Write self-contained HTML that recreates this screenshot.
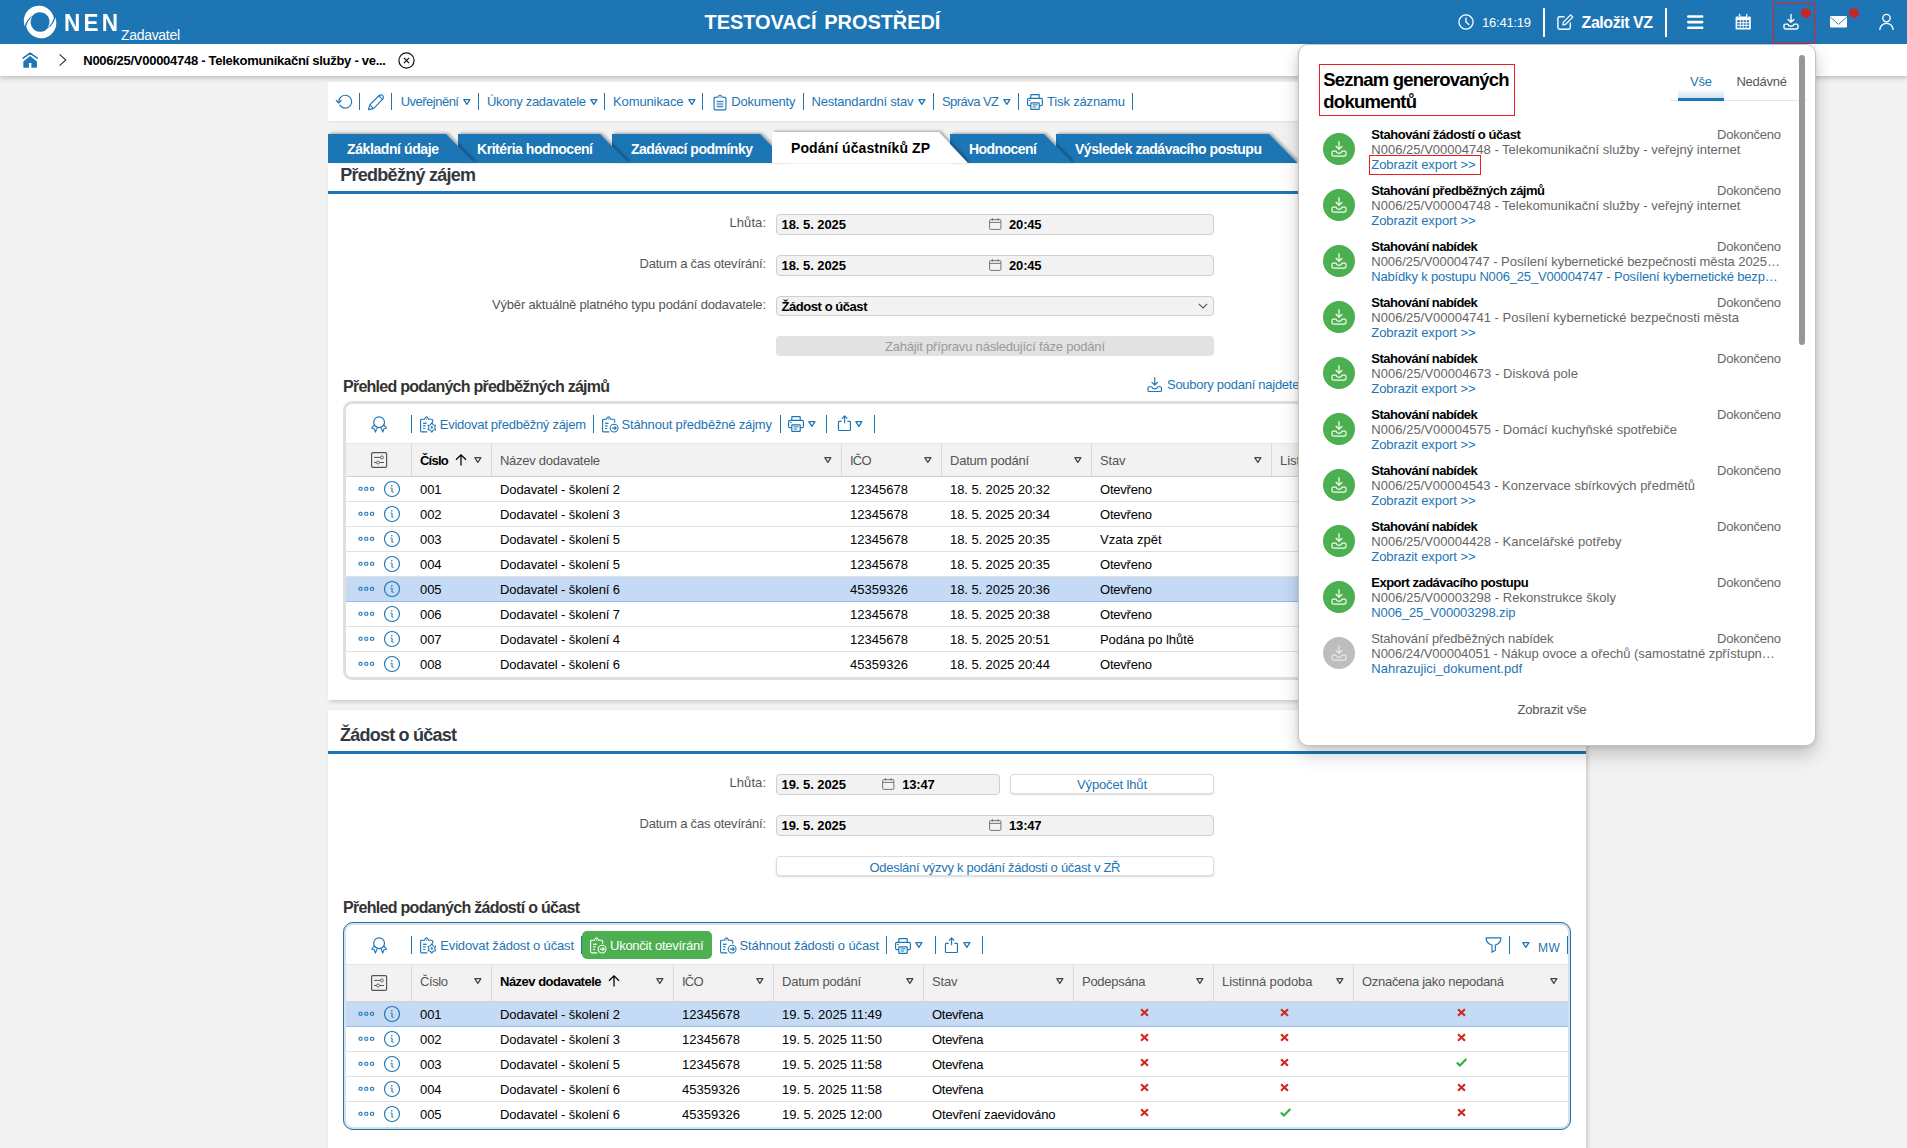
<!DOCTYPE html>
<html lang="cs"><head><meta charset="utf-8"><title>NEN - Zadavatel</title>
<style>
html,body{margin:0;padding:0;}
body{width:1907px;height:1148px;overflow:hidden;background:#f2f2f2;font-family:"Liberation Sans",sans-serif;font-size:13px;position:relative;}
.b{position:absolute;box-sizing:border-box;}
.t{position:absolute;white-space:pre;display:block;}
.i{position:absolute;overflow:visible;}
</style></head>
<body>
<div class="b" style="left:0px;top:44px;width:1907px;height:32px;background:#fff;box-shadow:0 2px 5px rgba(0,0,0,.22);"></div>
<div class="b" style="left:0px;top:0px;width:1907px;height:44px;background:#1d75b4;"></div>
<svg class="i" style="left:23px;top:5px" width="34" height="34" viewBox="0 0 34 34" ><path d="M1.84 21.52 A15.2 15.2 0 1 1 30.91 13.1 C29.8 16.6 27.8 20.2 24.6 22.6 A9.15 9.15 0 1 0 9.2 11.0 C5.0 13.4 2.5 17.6 1.84 21.52 Z" fill="#fff"/><path d="M1.84 21.52 A15.2 15.2 0 1 1 30.91 13.1 C29.8 16.6 27.8 20.2 24.6 22.6 A9.15 9.15 0 1 0 9.2 11.0 C5.0 13.4 2.5 17.6 1.84 21.52 Z" fill="#fff" transform="rotate(180 17.05 17.0)"/></svg>
<span class="t" style="left:63.70px;top:8px;font-size:24.5px;line-height:30px;color:#fff;font-weight:700;letter-spacing:3.481px;transform:scaleX(0.92);transform-origin:0 0;">NEN</span>
<span class="t" style="left:121.00px;top:25px;font-size:14px;line-height:20px;color:#fff;letter-spacing:-0.311px;">Zadavatel</span>
<span class="t" style="left:704.60px;top:9px;font-size:20px;line-height:26px;color:#fff;font-weight:700;letter-spacing:-0.091px;word-spacing:2.5px;">TESTOVACÍ PROSTŘEDÍ</span>
<svg class="i" style="left:1457.5px;top:14px" width="16" height="16" viewBox="0 0 16 16" ><circle cx="8" cy="8" r="7.1" fill="none" stroke="#fff" stroke-width="1.3"/><path d="M8 3.8 V8 L10.8 10.6" fill="none" stroke="#fff" stroke-width="1.3" stroke-linecap="round"/></svg>
<span class="t" style="left:1482.00px;top:13px;font-size:13px;line-height:20px;color:#fff;letter-spacing:-0.230px;">16:41:19</span>
<div class="b" style="left:1543px;top:8px;width:2px;height:29px;background:#fff"></div>
<svg class="i" style="left:1557px;top:14px" width="17" height="16" viewBox="0 0 17 16" ><path d="M7.5 2.7 H2.6 Q0.9 2.7 0.9 4.4 V13.6 Q0.9 15.2 2.6 15.2 H11.6 Q13.3 15.2 13.3 13.6 V8.6" fill="none" stroke="#fff" stroke-width="1.4"/><path d="M13.6 0.9 L15.8 3.1 L8.6 10.3 L5.9 10.9 L6.4 8.1 Z" fill="none" stroke="#fff" stroke-width="1.3" stroke-linejoin="round"/></svg>
<span class="t" style="left:1581.60px;top:12px;font-size:16px;line-height:22px;color:#fff;font-weight:700;letter-spacing:-0.462px;">Založit VZ</span>
<div class="b" style="left:1665px;top:8px;width:2px;height:29px;background:#fff"></div>
<svg class="i" style="left:1686.7px;top:14.9px" width="16.5" height="14.2" viewBox="0 0 16.5 14.2" ><path d="M1.3 1.5 H15.2 M1.3 7.1 H15.2 M1.3 12.7 H15.2" stroke="#fff" stroke-width="2.6" stroke-linecap="round"/></svg>
<svg class="i" style="left:1734.6px;top:14px" width="16.4" height="16" viewBox="0 0 16.4 16" ><path d="M1.8 2.6 H14.6 Q15.8 2.6 15.8 3.8 V14.4 Q15.8 15.6 14.6 15.6 H1.8 Q0.6 15.6 0.6 14.4 V3.8 Q0.6 2.6 1.8 2.6 Z" fill="#fff"/><path d="M4.6 0.4 V3.2 M11.8 0.4 V3.2" stroke="#fff" stroke-width="1.5" stroke-linecap="round"/><rect x="2.3" y="6.2" width="11.8" height="7.6" fill="#1d75b4"/><path d="M2.3 8.7 H14.1 M2.3 11.3 H14.1 M5.3 6.2 V13.8 M8.2 6.2 V13.8 M11.2 6.2 V13.8" stroke="#fff" stroke-width="1.0"/><path d="M3.9 1.2 V3.6 M12.5 1.2 V3.6" stroke="#1d75b4" stroke-width="0.6"/></svg>
<div class="b" style="left:1773px;top:3px;width:42px;height:41px;border:1.5px solid #ec1c24;"></div>
<svg class="i" style="left:1782.7px;top:14px" width="16" height="16" viewBox="0 0 16 16" ><path d="M8 0.5 V8.1 M5.1 5.5 L8 8.3 L10.9 5.5" fill="none" stroke="#fff" stroke-width="1.4" stroke-linecap="round" stroke-linejoin="round"/><path d="M5 10.1 H2.4 Q1 10.1 1 11.5 V13.6 Q1 15 2.4 15 H13.6 Q15 15 15 13.6 V11.5 Q15 10.1 13.6 10.1 H11 Q10.4 12.3 8 12.3 Q5.6 12.3 5 10.1 Z" fill="none" stroke="#fff" stroke-width="1.4" stroke-linejoin="round"/></svg>
<div class="b" style="left:1801px;top:8px;width:10px;height:10px;background:#c62828;border-radius:50%;"></div>
<svg class="i" style="left:1830px;top:16.3px" width="17" height="11.5" viewBox="0 0 17 11.5" ><rect x="0" y="0" width="17" height="11.5" rx="1.3" fill="#fff"/><path d="M0.7 1.3 L8.5 8.4 L16.5 1.3" fill="none" stroke="#1d75b4" stroke-width="0.9"/></svg>
<div class="b" style="left:1849px;top:8px;width:10px;height:10px;background:#c62828;border-radius:50%;"></div>
<svg class="i" style="left:1879px;top:14px" width="15" height="16" viewBox="0 0 15 16" ><circle cx="7.5" cy="4.1" r="3.7" fill="none" stroke="#fff" stroke-width="1.35"/><path d="M0.8 16 A6.7 6.7 0 0 1 14.2 16" fill="none" stroke="#fff" stroke-width="1.35"/></svg>
<svg class="i" style="left:22px;top:52px" width="16.4" height="16" viewBox="0 0 16.4 16" ><path d="M1.1 6.1 L8.16 1.1 L15.2 6.1" fill="none" stroke="#1d75b4" stroke-width="1.6" stroke-linecap="round" stroke-linejoin="round"/><path d="M8.16 4.07 L14.95 9.4 V15 Q14.95 15.87 14 15.87 H9.4 V11 H6.96 V15.87 H2.3 Q1.35 15.87 1.35 15 V9.4 Z" fill="#1d75b4"/></svg>
<svg class="i" style="left:59px;top:54px" width="8" height="12" viewBox="0 0 8 12" ><path d="M0.58 0.34 L6.87 6 L0.58 11.67" fill="none" stroke="#2b2f3a" stroke-width="1.05"/></svg>
<span class="t" style="left:83.30px;top:51px;font-size:13px;line-height:20px;color:#000;font-weight:700;letter-spacing:-0.277px;">N006/25/V00004748 - Telekomunikační služby - ve...</span>
<svg class="i" style="left:398px;top:51.5px" width="17" height="17" viewBox="0 0 17 17" ><circle cx="8.5" cy="8.5" r="7.6" fill="none" stroke="#111" stroke-width="1.2"/><path d="M5.9 5.9 L11.1 11.1 M11.1 5.9 L5.9 11.1" stroke="#111" stroke-width="1.3"/></svg>
<div class="b" style="left:328px;top:82px;width:1258px;height:39px;background:#fff;box-shadow:1px 1px 2px rgba(0,0,0,.08);"></div>
<svg class="i" style="left:336px;top:93.9px" width="16.5" height="15" viewBox="0 0 16.5 15" ><path d="M2.9 8.0 A6.4 6.4 0 1 1 3.9 11.1" fill="none" stroke="#1d75b4" stroke-width="1.15" stroke-linecap="round"/><path d="M0.3 6.5 L2.75 9.0 L5.2 6.7" fill="none" stroke="#1d75b4" stroke-width="1.15" stroke-linecap="round" stroke-linejoin="round"/></svg>
<div class="b" style="left:359px;top:93px;width:1px;height:17px;background:#1d75b4"></div>
<svg class="i" style="left:368px;top:93.8px" width="16.5" height="16.2" viewBox="0 0 16.5 16.2" ><path d="M0.45 15.65 L1.9 10.6 L11.2 1.5 Q12.7 0.2 14.5 1.3 Q16.2 2.9 15 4.9 L5.5 14.6 Z" fill="none" stroke="#1d75b4" stroke-width="1.15" stroke-linejoin="round"/><path d="M1.9 10.6 L5.5 14.6 M10.9 1.9 L14.5 5.4" stroke="#1d75b4" stroke-width="1.05"/></svg>
<div class="b" style="left:391px;top:93px;width:1px;height:17px;background:#1d75b4"></div>
<span class="t" style="left:400.70px;top:92px;font-size:13px;line-height:20px;color:#1d75b4;letter-spacing:-0.508px;">Uveřejnění</span>
<svg class="i" style="left:463px;top:98.8px" width="8" height="7" viewBox="0 0 8 7" ><path d="M0.8 0.7 H6.9 L3.85 5.4 Z" fill="none" stroke="#1d75b4" stroke-width="1.25" stroke-linejoin="round"/></svg>
<span class="t" style="left:487.00px;top:92px;font-size:13px;line-height:20px;color:#1d75b4;letter-spacing:-0.290px;">Úkony zadavatele</span>
<svg class="i" style="left:589.5px;top:98.8px" width="8" height="7" viewBox="0 0 8 7" ><path d="M0.8 0.7 H6.9 L3.85 5.4 Z" fill="none" stroke="#1d75b4" stroke-width="1.25" stroke-linejoin="round"/></svg>
<span class="t" style="left:613.00px;top:92px;font-size:13px;line-height:20px;color:#1d75b4;letter-spacing:-0.116px;">Komunikace</span>
<svg class="i" style="left:687.5px;top:98.8px" width="8" height="7" viewBox="0 0 8 7" ><path d="M0.8 0.7 H6.9 L3.85 5.4 Z" fill="none" stroke="#1d75b4" stroke-width="1.25" stroke-linejoin="round"/></svg>
<div class="b" style="left:478px;top:93px;width:1px;height:17px;background:#1d75b4"></div>
<div class="b" style="left:604px;top:93px;width:1px;height:17px;background:#1d75b4"></div>
<div class="b" style="left:702px;top:93px;width:1px;height:17px;background:#1d75b4"></div>
<div class="b" style="left:803px;top:93px;width:1px;height:17px;background:#1d75b4"></div>
<div class="b" style="left:933px;top:93px;width:1px;height:17px;background:#1d75b4"></div>
<div class="b" style="left:1018px;top:93px;width:1px;height:17px;background:#1d75b4"></div>
<div class="b" style="left:1132px;top:93px;width:1px;height:17px;background:#1d75b4"></div>
<svg class="i" style="left:712.5px;top:93.5px" width="14" height="17" viewBox="0 0 14 17" ><path d="M4.4 3.35 H2.1 Q1.05 3.35 1.05 4.4 V14.8 Q1.05 15.85 2.1 15.85 H11.9 Q12.95 15.85 12.95 14.8 V4.4 Q12.95 3.35 11.9 3.35 H9.6" fill="none" stroke="#1d75b4" stroke-width="1.15"/><path d="M4.4 3.35 C5.5 3.35 5.3 1.0 7 1.0 C8.7 1.0 8.5 3.35 9.6 3.35" fill="none" stroke="#1d75b4" stroke-width="1.15"/><circle cx="7" cy="3.2" r="0.65" fill="#1d75b4"/><path d="M3.6 7.4 H10.4 M3.6 12.6 H10.4" stroke="#1d75b4" stroke-width="1.5" opacity=".85"/><path d="M3.6 10 H10.4" stroke="#1d75b4" stroke-width="1.0"/></svg>
<span class="t" style="left:731.30px;top:92px;font-size:13px;line-height:20px;color:#1d75b4;letter-spacing:-0.194px;">Dokumenty</span>
<span class="t" style="left:811.50px;top:92px;font-size:13px;line-height:20px;color:#1d75b4;letter-spacing:-0.220px;">Nestandardní stav</span>
<svg class="i" style="left:917.7px;top:98.8px" width="8" height="7" viewBox="0 0 8 7" ><path d="M0.8 0.7 H6.9 L3.85 5.4 Z" fill="none" stroke="#1d75b4" stroke-width="1.25" stroke-linejoin="round"/></svg>
<span class="t" style="left:942.00px;top:92px;font-size:13px;line-height:20px;color:#1d75b4;letter-spacing:-0.553px;">Správa VZ</span>
<svg class="i" style="left:1002.6px;top:98.8px" width="8" height="7" viewBox="0 0 8 7" ><path d="M0.8 0.7 H6.9 L3.85 5.4 Z" fill="none" stroke="#1d75b4" stroke-width="1.25" stroke-linejoin="round"/></svg>
<svg class="i" style="left:1027px;top:94px" width="16" height="16" viewBox="0 0 16 16" ><path d="M3.8 4.4 V1.1 Q3.8 0.6 4.3 0.6 H11.7 Q12.2 0.6 12.2 1.1 V4.4" fill="none" stroke="#1d75b4" stroke-width="1.15"/><path d="M3.8 11.6 H1.8 Q0.6 11.6 0.6 10.4 V5.6 Q0.6 4.4 1.8 4.4 H14.2 Q15.4 4.4 15.4 5.6 V10.4 Q15.4 11.6 14.2 11.6 H12.2" fill="none" stroke="#1d75b4" stroke-width="1.15"/><rect x="3.8" y="8.8" width="8.4" height="6.6" rx="0.4" fill="none" stroke="#1d75b4" stroke-width="1.15"/><path d="M5.6 10.9 H10.6 M5.6 13 H9.2" stroke="#1d75b4" stroke-width="1.0"/><path d="M2.3 6.4 H3.3" stroke="#1d75b4" stroke-width="1.0" stroke-linecap="round"/></svg>
<span class="t" style="left:1047.00px;top:92px;font-size:13px;line-height:20px;color:#1d75b4;letter-spacing:-0.156px;">Tisk záznamu</span>
<div class="b" style="left:328px;top:162px;width:1258px;height:538px;background:#fff;box-shadow:2px 2px 4px rgba(0,0,0,.16);"></div>
<svg class="i" style="left:328px;top:126px" width="1010" height="37" viewBox="0 0 1010 37"><defs><filter id="ts" x="-5%" y="-30%" width="110%" height="160%"><feGaussianBlur in="SourceAlpha" stdDeviation="1.5"/><feOffset dx="2" dy="-0.8"/><feComponentTransfer><feFuncA type="linear" slope="0.33"/></feComponentTransfer><feMerge><feMergeNode/><feMergeNode in="SourceGraphic"/></feMerge></filter></defs><polygon filter="url(#ts)" points="728,8 941,8 969.6,37 728,37" fill="#1d75b4"/><polygon filter="url(#ts)" points="622,8 716,8 744.6,37 622,37" fill="#1d75b4"/><polygon filter="url(#ts)" points="284,8 432,8 460.6,37 284,37" fill="#1d75b4"/><polygon filter="url(#ts)" points="130,8 272,8 300.6,37 130,37" fill="#1d75b4"/><polygon filter="url(#ts)" points="0,8 118,8 146.6,37 0,37" fill="#1d75b4"/><polygon filter="url(#ts)" points="444,6 610.8,6 639.8,37 444,37" fill="#fff"/></svg>
<span class="t" style="left:347.00px;top:139px;font-size:14px;line-height:20px;color:#fff;font-weight:700;letter-spacing:-0.404px;">Základní údaje</span>
<span class="t" style="left:477.00px;top:139px;font-size:14px;line-height:20px;color:#fff;font-weight:700;letter-spacing:-0.452px;">Kritéria hodnocení</span>
<span class="t" style="left:631.00px;top:139px;font-size:14px;line-height:20px;color:#fff;font-weight:700;letter-spacing:-0.496px;">Zadávací podmínky</span>
<span class="t" style="left:791.00px;top:138px;font-size:14px;line-height:20px;color:#000;font-weight:700;letter-spacing:0.072px;">Podání účastníků ZP</span>
<span class="t" style="left:969.00px;top:139px;font-size:14px;line-height:20px;color:#fff;font-weight:700;letter-spacing:-0.543px;">Hodnocení</span>
<span class="t" style="left:1075.00px;top:139px;font-size:14px;line-height:20px;color:#fff;font-weight:700;letter-spacing:-0.468px;">Výsledek zadávacího postupu</span>
<span class="t" style="left:340.30px;top:163px;font-size:18px;line-height:24px;color:#333840;font-weight:700;letter-spacing:-0.740px;">Předběžný zájem</span>
<div class="b" style="left:328px;top:191px;width:1258px;height:3px;background:#1d75b4;"></div>
<span class="t" style="left:729.50px;top:213px;font-size:13px;line-height:20px;color:#555;letter-spacing:0.069px;">Lhůta:</span>
<div class="b" style="left:776px;top:214px;width:438px;height:21px;background:#f2f2f2;border:1px solid #cfcfcf;border-radius:4px;"></div>
<span class="t" style="left:781.50px;top:215px;font-size:13px;line-height:20px;color:#000;font-weight:700;letter-spacing:-0.056px;">18. 5. 2025</span>
<svg class="i" style="left:989px;top:218px" width="12.5" height="12" viewBox="0 0 12.5 12" ><rect x="0.6" y="1.6" width="11.3" height="9.8" rx="1" fill="none" stroke="#666" stroke-width="0.9"/><path d="M0.6 4.4 H11.9 M3.4 0.2 V2.6 M9.1 0.2 V2.6" stroke="#666" stroke-width="0.9"/></svg>
<span class="t" style="left:1009.00px;top:215px;font-size:13px;line-height:20px;color:#000;font-weight:700;letter-spacing:-0.163px;">20:45</span>
<span class="t" style="left:639.50px;top:254px;font-size:13px;line-height:20px;color:#555;letter-spacing:-0.204px;">Datum a čas otevírání:</span>
<div class="b" style="left:776px;top:255px;width:438px;height:21px;background:#f2f2f2;border:1px solid #cfcfcf;border-radius:4px;"></div>
<span class="t" style="left:781.50px;top:256px;font-size:13px;line-height:20px;color:#000;font-weight:700;letter-spacing:-0.056px;">18. 5. 2025</span>
<svg class="i" style="left:989px;top:259px" width="12.5" height="12" viewBox="0 0 12.5 12" ><rect x="0.6" y="1.6" width="11.3" height="9.8" rx="1" fill="none" stroke="#666" stroke-width="0.9"/><path d="M0.6 4.4 H11.9 M3.4 0.2 V2.6 M9.1 0.2 V2.6" stroke="#666" stroke-width="0.9"/></svg>
<span class="t" style="left:1009.00px;top:256px;font-size:13px;line-height:20px;color:#000;font-weight:700;letter-spacing:-0.163px;">20:45</span>
<span class="t" style="left:492.00px;top:295px;font-size:13px;line-height:20px;color:#555;letter-spacing:-0.187px;">Výběr aktuálně platného typu podání dodavatele:</span>
<div class="b" style="left:776px;top:296px;width:438px;height:20px;background:#f2f2f2;border:1px solid #cfcfcf;border-radius:4px;"></div>
<span class="t" style="left:781.50px;top:297px;font-size:13px;line-height:20px;color:#000;font-weight:700;letter-spacing:-0.442px;">Žádost o účast</span>
<svg class="i" style="left:1197.7px;top:302.8px" width="10" height="6" viewBox="0 0 10 6" ><path d="M0.8 0.8 L5 5 L9.2 0.8" fill="none" stroke="#555" stroke-width="1.1"/></svg>
<div class="b" style="left:776px;top:336px;width:438px;height:20px;background:#e2e2e2;border-radius:4px;"></div>
<span class="t" style="left:885.00px;top:337px;font-size:13px;line-height:20px;color:#9a9a9a;letter-spacing:-0.196px;">Zahájit přípravu následující fáze podání</span>
<span class="t" style="left:343.00px;top:376px;font-size:16px;line-height:22px;color:#333;font-weight:700;letter-spacing:-0.746px;">Přehled podaných předběžných zájmů</span>
<svg class="i" style="left:1147px;top:376.5px" width="15.5" height="15.5" viewBox="0 0 16 16" ><path d="M8 0.5 V8.1 M5.1 5.5 L8 8.3 L10.9 5.5" fill="none" stroke="#1d75b4" stroke-width="1.2" stroke-linecap="round" stroke-linejoin="round"/><path d="M5 10.1 H2.4 Q1 10.1 1 11.5 V13.6 Q1 15 2.4 15 H13.6 Q15 15 15 13.6 V11.5 Q15 10.1 13.6 10.1 H11 Q10.4 12.3 8 12.3 Q5.6 12.3 5 10.1 Z" fill="none" stroke="#1d75b4" stroke-width="1.2" stroke-linejoin="round"/></svg>
<span class="t" style="left:1167.00px;top:375px;font-size:13px;line-height:20px;color:#1d75b4;letter-spacing:-0.271px;">Soubory podaní najdete v sekci Stahování</span>
<div class="b" style="left:343px;top:401px;width:1240px;height:279px;border:3px solid #dddfe1;border-radius:9px;background:#fff;"></div>
<svg class="i" style="left:371px;top:415.5px" width="16.2" height="16.8" viewBox="0 0 16.2 16.8" ><circle cx="8.1" cy="6.2" r="5.4" fill="none" stroke="#1d75b4" stroke-width="1.15"/><path d="M3.3 9.2 L0.6 12.1 L3.5 13 L4.4 16.1 L6.2 11.9 M12.9 9.2 L15.6 12.1 L12.7 13 L11.8 16.1 L10 11.9" fill="none" stroke="#1d75b4" stroke-width="1.1" stroke-linejoin="round" stroke-linecap="round"/></svg>
<div class="b" style="left:411px;top:415px;width:1px;height:18px;background:#1d75b4"></div>
<svg class="i" style="left:420px;top:415.5px" width="17" height="17" viewBox="0 0 17 17" ><path d="M4 3.2 H1.7 Q0.6 3.2 0.6 4.3 V14.8 Q0.6 15.9 1.7 15.9 H6.8 M9.1 3.2 H11.6 Q12.7 3.2 12.7 4.3 V6.3" fill="none" stroke="#1d75b4" stroke-width="1.1" stroke-linecap="round"/><path d="M4 3.2 C5.1 3.2 4.9 0.9 6.55 0.9 C8.2 0.9 8 3.2 9.1 3.2" fill="none" stroke="#1d75b4" stroke-width="1.1"/><circle cx="6.55" cy="3.1" r="0.65" fill="#1d75b4"/><path d="M3.1 7.3 H6.6" stroke="#1d75b4" stroke-width="1.3"/><path d="M3.1 9.9 H5.6 M3.1 12.5 H5.2" stroke="#1d75b4" stroke-width="1.1"/><polygon points="11.80,6.80 13.23,8.90 15.67,9.15 14.65,11.50 15.67,13.85 13.23,14.10 11.80,16.20 10.38,14.10 7.93,13.85 8.95,11.50 7.93,9.15 10.38,8.90" fill="none" stroke="#1d75b4" stroke-width="1.05" stroke-linejoin="round"/><circle cx="11.8" cy="11.5" r="1.15" fill="#1d75b4"/></svg>
<span class="t" style="left:439.80px;top:415px;font-size:13px;line-height:20px;color:#1d75b4;letter-spacing:-0.273px;">Evidovat předběžný zájem</span>
<div class="b" style="left:593px;top:415px;width:1px;height:18px;background:#1d75b4"></div>
<svg class="i" style="left:602px;top:415.5px" width="17" height="17" viewBox="0 0 17 17" ><path d="M4 3.2 H1.7 Q0.6 3.2 0.6 4.3 V14.8 Q0.6 15.9 1.7 15.9 H6.8 M9.1 3.2 H11.6 Q12.7 3.2 12.7 4.3 V6.3" fill="none" stroke="#1d75b4" stroke-width="1.1" stroke-linecap="round"/><path d="M4 3.2 C5.1 3.2 4.9 0.9 6.55 0.9 C8.2 0.9 8 3.2 9.1 3.2" fill="none" stroke="#1d75b4" stroke-width="1.1"/><circle cx="6.55" cy="3.1" r="0.65" fill="#1d75b4"/><path d="M3.1 7.3 H6.6" stroke="#1d75b4" stroke-width="1.3"/><path d="M3.1 9.9 H5.6 M3.1 12.5 H5.2" stroke="#1d75b4" stroke-width="1.1"/><circle cx="12.1" cy="12.1" r="3.95" fill="none" stroke="#1d75b4" stroke-width="1.05"/><path d="M9.9 12.1 H14 M12.5 10.4 L14.2 12.1 L12.5 13.8" fill="none" stroke="#1d75b4" stroke-width="1.05"/></svg>
<span class="t" style="left:621.60px;top:415px;font-size:13px;line-height:20px;color:#1d75b4;letter-spacing:-0.185px;">Stáhnout předběžné zájmy</span>
<div class="b" style="left:780px;top:415px;width:1px;height:18px;background:#1d75b4"></div>
<svg class="i" style="left:788px;top:416px" width="16" height="16" viewBox="0 0 16 16" ><path d="M3.8 4.4 V1.1 Q3.8 0.6 4.3 0.6 H11.7 Q12.2 0.6 12.2 1.1 V4.4" fill="none" stroke="#1d75b4" stroke-width="1.15"/><path d="M3.8 11.6 H1.8 Q0.6 11.6 0.6 10.4 V5.6 Q0.6 4.4 1.8 4.4 H14.2 Q15.4 4.4 15.4 5.6 V10.4 Q15.4 11.6 14.2 11.6 H12.2" fill="none" stroke="#1d75b4" stroke-width="1.15"/><rect x="3.8" y="8.8" width="8.4" height="6.6" rx="0.4" fill="none" stroke="#1d75b4" stroke-width="1.15"/><path d="M5.6 10.9 H10.6 M5.6 13 H9.2" stroke="#1d75b4" stroke-width="1.0"/><path d="M2.3 6.4 H3.3" stroke="#1d75b4" stroke-width="1.0" stroke-linecap="round"/></svg>
<svg class="i" style="left:808px;top:421px" width="8" height="7" viewBox="0 0 8 7" ><path d="M0.8 0.7 H6.9 L3.85 5.4 Z" fill="none" stroke="#1d75b4" stroke-width="1.25" stroke-linejoin="round"/></svg>
<div class="b" style="left:826px;top:415px;width:1px;height:18px;background:#1d75b4"></div>
<svg class="i" style="left:836.5px;top:415.3px" width="15" height="16.2" viewBox="0 0 15 16.2" ><path d="M4.6 6.45 H2.2 Q1.45 6.45 1.45 7.2 V14.8 Q1.45 15.55 2.2 15.55 H12.7 Q13.45 15.55 13.45 14.8 V7.2 Q13.45 6.45 12.7 6.45 H10.4" fill="none" stroke="#1d75b4" stroke-width="1.15"/><path d="M7.6 8.3 V1.1 M4.9 3.7 L7.6 0.95 L10.3 3.7" fill="none" stroke="#1d75b4" stroke-width="1.15" stroke-linejoin="round"/></svg>
<svg class="i" style="left:855px;top:421px" width="8" height="7" viewBox="0 0 8 7" ><path d="M0.8 0.7 H6.9 L3.85 5.4 Z" fill="none" stroke="#1d75b4" stroke-width="1.25" stroke-linejoin="round"/></svg>
<div class="b" style="left:874px;top:415px;width:1px;height:18px;background:#1d75b4"></div>
<div class="b" style="left:346px;top:443px;width:1234px;height:34px;background:#f2f2f2;border-top:1px solid #e6e6e6;border-bottom:1px solid #d2d2d2;"></div>
<div class="b" style="left:411px;top:444px;width:1px;height:32px;background:#d9d9d9;"></div>
<div class="b" style="left:491px;top:444px;width:1px;height:32px;background:#d9d9d9;"></div>
<div class="b" style="left:841px;top:444px;width:1px;height:32px;background:#d9d9d9;"></div>
<div class="b" style="left:941px;top:444px;width:1px;height:32px;background:#d9d9d9;"></div>
<div class="b" style="left:1091px;top:444px;width:1px;height:32px;background:#d9d9d9;"></div>
<div class="b" style="left:1271px;top:444px;width:1px;height:32px;background:#d9d9d9;"></div>
<div class="b" style="left:1411px;top:444px;width:1px;height:32px;background:#d9d9d9;"></div>
<svg class="i" style="left:370.9px;top:452px" width="16.2" height="16" viewBox="0 0 16.2 16" ><rect x="0.6" y="0.6" width="15" height="14.8" rx="1.2" fill="none" stroke="#555" stroke-width="1.2"/><path d="M3 5.4 H9.4 M3 10.5 H5.5 M8.5 10.5 H13" stroke="#555" stroke-width="1.0"/><circle cx="10.9" cy="5.4" r="1.5" fill="none" stroke="#555" stroke-width="0.9"/><circle cx="7" cy="10.5" r="1.5" fill="none" stroke="#555" stroke-width="0.9"/></svg>
<span class="t" style="left:420.00px;top:451px;font-size:13px;line-height:20px;color:#000;font-weight:700;letter-spacing:-0.774px;">Číslo</span>
<svg class="i" style="left:455px;top:454px" width="12" height="12" viewBox="0 0 12 12" ><path d="M6 11.6 V0.9 M1 5.8 L6 0.8 L11 5.8" fill="none" stroke="#000" stroke-width="1.25"/></svg>
<svg class="i" style="left:474.3px;top:457.2px" width="8" height="7" viewBox="0 0 8 7" ><path d="M0.8 0.7 H6.9 L3.85 5.4 Z" fill="none" stroke="#444" stroke-width="1.25" stroke-linejoin="round"/></svg>
<span class="t" style="left:500.00px;top:451px;font-size:13px;line-height:20px;color:#555;letter-spacing:-0.272px;">Název dodavatele</span>
<svg class="i" style="left:824px;top:457.2px" width="8" height="7" viewBox="0 0 8 7" ><path d="M0.8 0.7 H6.9 L3.85 5.4 Z" fill="none" stroke="#444" stroke-width="1.25" stroke-linejoin="round"/></svg>
<span class="t" style="left:850.00px;top:451px;font-size:13px;line-height:20px;color:#555;letter-spacing:-0.812px;">IČO</span>
<svg class="i" style="left:924px;top:457.2px" width="8" height="7" viewBox="0 0 8 7" ><path d="M0.8 0.7 H6.9 L3.85 5.4 Z" fill="none" stroke="#444" stroke-width="1.25" stroke-linejoin="round"/></svg>
<span class="t" style="left:950.00px;top:451px;font-size:13px;line-height:20px;color:#555;letter-spacing:-0.243px;">Datum podání</span>
<svg class="i" style="left:1074px;top:457.2px" width="8" height="7" viewBox="0 0 8 7" ><path d="M0.8 0.7 H6.9 L3.85 5.4 Z" fill="none" stroke="#444" stroke-width="1.25" stroke-linejoin="round"/></svg>
<span class="t" style="left:1100.00px;top:451px;font-size:13px;line-height:20px;color:#555;letter-spacing:-0.172px;">Stav</span>
<svg class="i" style="left:1254px;top:457.2px" width="8" height="7" viewBox="0 0 8 7" ><path d="M0.8 0.7 H6.9 L3.85 5.4 Z" fill="none" stroke="#444" stroke-width="1.25" stroke-linejoin="round"/></svg>
<span class="t" style="left:1280.00px;top:451px;font-size:13px;line-height:20px;color:#555;letter-spacing:-0.058px;">Listinná podoba</span>
<svg class="i" style="left:1394px;top:457.2px" width="8" height="7" viewBox="0 0 8 7" ><path d="M0.8 0.7 H6.9 L3.85 5.4 Z" fill="none" stroke="#444" stroke-width="1.25" stroke-linejoin="round"/></svg>
<div class="b" style="left:346px;top:501px;width:1234px;height:1px;background:#e0e0e0;"></div>
<svg class="i" style="left:357.5px;top:486.3px" width="17" height="5.6" viewBox="0 0 17 5.6" ><rect x="1" y="1.3" width="3.1" height="3.0" rx="1.1" fill="none" stroke="#1d75b4" stroke-width="1.1"/><rect x="6.75" y="1.3" width="3.1" height="3.0" rx="1.1" fill="none" stroke="#1d75b4" stroke-width="1.1"/><rect x="12.55" y="1.3" width="3.1" height="3.0" rx="1.1" fill="none" stroke="#1d75b4" stroke-width="1.1"/></svg>
<svg class="i" style="left:384px;top:481px" width="16" height="16" viewBox="0 0 16 16" ><circle cx="8" cy="8" r="7.5" fill="none" stroke="#1d75b4" stroke-width="1.15"/><circle cx="7.8" cy="4.7" r="0.8" fill="#1d75b4"/><path d="M7 6.9 Q8.3 6.9 8.1 8.5 L7.9 10 Q7.8 11.3 9.2 11.2" fill="none" stroke="#1d75b4" stroke-width="1.05" stroke-linecap="round"/></svg>
<span class="t" style="left:420.00px;top:480px;font-size:13px;line-height:20px;color:#000;letter-spacing:-0.102px;">001</span>
<span class="t" style="left:500.00px;top:480px;font-size:13px;line-height:20px;color:#000;letter-spacing:-0.106px;">Dodavatel - školení 2</span>
<span class="t" style="left:850.00px;top:480px;font-size:13px;line-height:20px;color:#000;letter-spacing:0.022px;">12345678</span>
<span class="t" style="left:950.00px;top:480px;font-size:13px;line-height:20px;color:#000;letter-spacing:-0.075px;">18. 5. 2025 20:32</span>
<span class="t" style="left:1100.00px;top:480px;font-size:13px;line-height:20px;color:#000;letter-spacing:-0.212px;">Otevřeno</span>
<div class="b" style="left:346px;top:526px;width:1234px;height:1px;background:#e0e0e0;"></div>
<svg class="i" style="left:357.5px;top:511.3px" width="17" height="5.6" viewBox="0 0 17 5.6" ><rect x="1" y="1.3" width="3.1" height="3.0" rx="1.1" fill="none" stroke="#1d75b4" stroke-width="1.1"/><rect x="6.75" y="1.3" width="3.1" height="3.0" rx="1.1" fill="none" stroke="#1d75b4" stroke-width="1.1"/><rect x="12.55" y="1.3" width="3.1" height="3.0" rx="1.1" fill="none" stroke="#1d75b4" stroke-width="1.1"/></svg>
<svg class="i" style="left:384px;top:506px" width="16" height="16" viewBox="0 0 16 16" ><circle cx="8" cy="8" r="7.5" fill="none" stroke="#1d75b4" stroke-width="1.15"/><circle cx="7.8" cy="4.7" r="0.8" fill="#1d75b4"/><path d="M7 6.9 Q8.3 6.9 8.1 8.5 L7.9 10 Q7.8 11.3 9.2 11.2" fill="none" stroke="#1d75b4" stroke-width="1.05" stroke-linecap="round"/></svg>
<span class="t" style="left:420.00px;top:505px;font-size:13px;line-height:20px;color:#000;letter-spacing:-0.102px;">002</span>
<span class="t" style="left:500.00px;top:505px;font-size:13px;line-height:20px;color:#000;letter-spacing:-0.106px;">Dodavatel - školení 3</span>
<span class="t" style="left:850.00px;top:505px;font-size:13px;line-height:20px;color:#000;letter-spacing:0.022px;">12345678</span>
<span class="t" style="left:950.00px;top:505px;font-size:13px;line-height:20px;color:#000;letter-spacing:-0.075px;">18. 5. 2025 20:34</span>
<span class="t" style="left:1100.00px;top:505px;font-size:13px;line-height:20px;color:#000;letter-spacing:-0.212px;">Otevřeno</span>
<div class="b" style="left:346px;top:551px;width:1234px;height:1px;background:#e0e0e0;"></div>
<svg class="i" style="left:357.5px;top:536.3px" width="17" height="5.6" viewBox="0 0 17 5.6" ><rect x="1" y="1.3" width="3.1" height="3.0" rx="1.1" fill="none" stroke="#1d75b4" stroke-width="1.1"/><rect x="6.75" y="1.3" width="3.1" height="3.0" rx="1.1" fill="none" stroke="#1d75b4" stroke-width="1.1"/><rect x="12.55" y="1.3" width="3.1" height="3.0" rx="1.1" fill="none" stroke="#1d75b4" stroke-width="1.1"/></svg>
<svg class="i" style="left:384px;top:531px" width="16" height="16" viewBox="0 0 16 16" ><circle cx="8" cy="8" r="7.5" fill="none" stroke="#1d75b4" stroke-width="1.15"/><circle cx="7.8" cy="4.7" r="0.8" fill="#1d75b4"/><path d="M7 6.9 Q8.3 6.9 8.1 8.5 L7.9 10 Q7.8 11.3 9.2 11.2" fill="none" stroke="#1d75b4" stroke-width="1.05" stroke-linecap="round"/></svg>
<span class="t" style="left:420.00px;top:530px;font-size:13px;line-height:20px;color:#000;letter-spacing:-0.102px;">003</span>
<span class="t" style="left:500.00px;top:530px;font-size:13px;line-height:20px;color:#000;letter-spacing:-0.106px;">Dodavatel - školení 5</span>
<span class="t" style="left:850.00px;top:530px;font-size:13px;line-height:20px;color:#000;letter-spacing:0.022px;">12345678</span>
<span class="t" style="left:950.00px;top:530px;font-size:13px;line-height:20px;color:#000;letter-spacing:-0.075px;">18. 5. 2025 20:35</span>
<span class="t" style="left:1100.00px;top:530px;font-size:13px;line-height:20px;color:#000;letter-spacing:0.007px;">Vzata zpět</span>
<div class="b" style="left:346px;top:576px;width:1234px;height:1px;background:#e0e0e0;"></div>
<svg class="i" style="left:357.5px;top:561.3px" width="17" height="5.6" viewBox="0 0 17 5.6" ><rect x="1" y="1.3" width="3.1" height="3.0" rx="1.1" fill="none" stroke="#1d75b4" stroke-width="1.1"/><rect x="6.75" y="1.3" width="3.1" height="3.0" rx="1.1" fill="none" stroke="#1d75b4" stroke-width="1.1"/><rect x="12.55" y="1.3" width="3.1" height="3.0" rx="1.1" fill="none" stroke="#1d75b4" stroke-width="1.1"/></svg>
<svg class="i" style="left:384px;top:556px" width="16" height="16" viewBox="0 0 16 16" ><circle cx="8" cy="8" r="7.5" fill="none" stroke="#1d75b4" stroke-width="1.15"/><circle cx="7.8" cy="4.7" r="0.8" fill="#1d75b4"/><path d="M7 6.9 Q8.3 6.9 8.1 8.5 L7.9 10 Q7.8 11.3 9.2 11.2" fill="none" stroke="#1d75b4" stroke-width="1.05" stroke-linecap="round"/></svg>
<span class="t" style="left:420.00px;top:555px;font-size:13px;line-height:20px;color:#000;letter-spacing:-0.102px;">004</span>
<span class="t" style="left:500.00px;top:555px;font-size:13px;line-height:20px;color:#000;letter-spacing:-0.106px;">Dodavatel - školení 5</span>
<span class="t" style="left:850.00px;top:555px;font-size:13px;line-height:20px;color:#000;letter-spacing:0.022px;">12345678</span>
<span class="t" style="left:950.00px;top:555px;font-size:13px;line-height:20px;color:#000;letter-spacing:-0.075px;">18. 5. 2025 20:35</span>
<span class="t" style="left:1100.00px;top:555px;font-size:13px;line-height:20px;color:#000;letter-spacing:-0.212px;">Otevřeno</span>
<div class="b" style="left:346px;top:577px;width:1234px;height:25px;background:#c4daf5;border-bottom:1px solid #93baeb;"></div>
<svg class="i" style="left:357.5px;top:586.3px" width="17" height="5.6" viewBox="0 0 17 5.6" ><rect x="1" y="1.3" width="3.1" height="3.0" rx="1.1" fill="none" stroke="#1d75b4" stroke-width="1.1"/><rect x="6.75" y="1.3" width="3.1" height="3.0" rx="1.1" fill="none" stroke="#1d75b4" stroke-width="1.1"/><rect x="12.55" y="1.3" width="3.1" height="3.0" rx="1.1" fill="none" stroke="#1d75b4" stroke-width="1.1"/></svg>
<svg class="i" style="left:384px;top:581px" width="16" height="16" viewBox="0 0 16 16" ><circle cx="8" cy="8" r="7.5" fill="none" stroke="#1d75b4" stroke-width="1.15"/><circle cx="7.8" cy="4.7" r="0.8" fill="#1d75b4"/><path d="M7 6.9 Q8.3 6.9 8.1 8.5 L7.9 10 Q7.8 11.3 9.2 11.2" fill="none" stroke="#1d75b4" stroke-width="1.05" stroke-linecap="round"/></svg>
<span class="t" style="left:420.00px;top:580px;font-size:13px;line-height:20px;color:#000;letter-spacing:-0.102px;">005</span>
<span class="t" style="left:500.00px;top:580px;font-size:13px;line-height:20px;color:#000;letter-spacing:-0.106px;">Dodavatel - školení 6</span>
<span class="t" style="left:850.00px;top:580px;font-size:13px;line-height:20px;color:#000;letter-spacing:0.022px;">45359326</span>
<span class="t" style="left:950.00px;top:580px;font-size:13px;line-height:20px;color:#000;letter-spacing:-0.075px;">18. 5. 2025 20:36</span>
<span class="t" style="left:1100.00px;top:580px;font-size:13px;line-height:20px;color:#000;letter-spacing:-0.212px;">Otevřeno</span>
<div class="b" style="left:346px;top:626px;width:1234px;height:1px;background:#e0e0e0;"></div>
<svg class="i" style="left:357.5px;top:611.3px" width="17" height="5.6" viewBox="0 0 17 5.6" ><rect x="1" y="1.3" width="3.1" height="3.0" rx="1.1" fill="none" stroke="#1d75b4" stroke-width="1.1"/><rect x="6.75" y="1.3" width="3.1" height="3.0" rx="1.1" fill="none" stroke="#1d75b4" stroke-width="1.1"/><rect x="12.55" y="1.3" width="3.1" height="3.0" rx="1.1" fill="none" stroke="#1d75b4" stroke-width="1.1"/></svg>
<svg class="i" style="left:384px;top:606px" width="16" height="16" viewBox="0 0 16 16" ><circle cx="8" cy="8" r="7.5" fill="none" stroke="#1d75b4" stroke-width="1.15"/><circle cx="7.8" cy="4.7" r="0.8" fill="#1d75b4"/><path d="M7 6.9 Q8.3 6.9 8.1 8.5 L7.9 10 Q7.8 11.3 9.2 11.2" fill="none" stroke="#1d75b4" stroke-width="1.05" stroke-linecap="round"/></svg>
<span class="t" style="left:420.00px;top:605px;font-size:13px;line-height:20px;color:#000;letter-spacing:-0.102px;">006</span>
<span class="t" style="left:500.00px;top:605px;font-size:13px;line-height:20px;color:#000;letter-spacing:-0.106px;">Dodavatel - školení 7</span>
<span class="t" style="left:850.00px;top:605px;font-size:13px;line-height:20px;color:#000;letter-spacing:0.022px;">12345678</span>
<span class="t" style="left:950.00px;top:605px;font-size:13px;line-height:20px;color:#000;letter-spacing:-0.075px;">18. 5. 2025 20:38</span>
<span class="t" style="left:1100.00px;top:605px;font-size:13px;line-height:20px;color:#000;letter-spacing:-0.212px;">Otevřeno</span>
<div class="b" style="left:346px;top:651px;width:1234px;height:1px;background:#e0e0e0;"></div>
<svg class="i" style="left:357.5px;top:636.3px" width="17" height="5.6" viewBox="0 0 17 5.6" ><rect x="1" y="1.3" width="3.1" height="3.0" rx="1.1" fill="none" stroke="#1d75b4" stroke-width="1.1"/><rect x="6.75" y="1.3" width="3.1" height="3.0" rx="1.1" fill="none" stroke="#1d75b4" stroke-width="1.1"/><rect x="12.55" y="1.3" width="3.1" height="3.0" rx="1.1" fill="none" stroke="#1d75b4" stroke-width="1.1"/></svg>
<svg class="i" style="left:384px;top:631px" width="16" height="16" viewBox="0 0 16 16" ><circle cx="8" cy="8" r="7.5" fill="none" stroke="#1d75b4" stroke-width="1.15"/><circle cx="7.8" cy="4.7" r="0.8" fill="#1d75b4"/><path d="M7 6.9 Q8.3 6.9 8.1 8.5 L7.9 10 Q7.8 11.3 9.2 11.2" fill="none" stroke="#1d75b4" stroke-width="1.05" stroke-linecap="round"/></svg>
<span class="t" style="left:420.00px;top:630px;font-size:13px;line-height:20px;color:#000;letter-spacing:-0.102px;">007</span>
<span class="t" style="left:500.00px;top:630px;font-size:13px;line-height:20px;color:#000;letter-spacing:-0.106px;">Dodavatel - školení 4</span>
<span class="t" style="left:850.00px;top:630px;font-size:13px;line-height:20px;color:#000;letter-spacing:0.022px;">12345678</span>
<span class="t" style="left:950.00px;top:630px;font-size:13px;line-height:20px;color:#000;letter-spacing:-0.075px;">18. 5. 2025 20:51</span>
<span class="t" style="left:1100.00px;top:630px;font-size:13px;line-height:20px;color:#000;letter-spacing:-0.050px;">Podána po lhůtě</span>
<svg class="i" style="left:357.5px;top:661.3px" width="17" height="5.6" viewBox="0 0 17 5.6" ><rect x="1" y="1.3" width="3.1" height="3.0" rx="1.1" fill="none" stroke="#1d75b4" stroke-width="1.1"/><rect x="6.75" y="1.3" width="3.1" height="3.0" rx="1.1" fill="none" stroke="#1d75b4" stroke-width="1.1"/><rect x="12.55" y="1.3" width="3.1" height="3.0" rx="1.1" fill="none" stroke="#1d75b4" stroke-width="1.1"/></svg>
<svg class="i" style="left:384px;top:656px" width="16" height="16" viewBox="0 0 16 16" ><circle cx="8" cy="8" r="7.5" fill="none" stroke="#1d75b4" stroke-width="1.15"/><circle cx="7.8" cy="4.7" r="0.8" fill="#1d75b4"/><path d="M7 6.9 Q8.3 6.9 8.1 8.5 L7.9 10 Q7.8 11.3 9.2 11.2" fill="none" stroke="#1d75b4" stroke-width="1.05" stroke-linecap="round"/></svg>
<span class="t" style="left:420.00px;top:655px;font-size:13px;line-height:20px;color:#000;letter-spacing:-0.102px;">008</span>
<span class="t" style="left:500.00px;top:655px;font-size:13px;line-height:20px;color:#000;letter-spacing:-0.106px;">Dodavatel - školení 6</span>
<span class="t" style="left:850.00px;top:655px;font-size:13px;line-height:20px;color:#000;letter-spacing:0.022px;">45359326</span>
<span class="t" style="left:950.00px;top:655px;font-size:13px;line-height:20px;color:#000;letter-spacing:-0.075px;">18. 5. 2025 20:44</span>
<span class="t" style="left:1100.00px;top:655px;font-size:13px;line-height:20px;color:#000;letter-spacing:-0.212px;">Otevřeno</span>
<div class="b" style="left:328px;top:710px;width:1258px;height:460px;background:#fff;box-shadow:2px 2px 4px rgba(0,0,0,.16);"></div>
<span class="t" style="left:340.00px;top:723px;font-size:18px;line-height:24px;color:#333840;font-weight:700;letter-spacing:-0.772px;">Žádost o účast</span>
<div class="b" style="left:328px;top:751px;width:1258px;height:3px;background:#1d75b4;"></div>
<span class="t" style="left:729.50px;top:773px;font-size:13px;line-height:20px;color:#555;letter-spacing:0.069px;">Lhůta:</span>
<div class="b" style="left:776px;top:774px;width:224px;height:21px;background:#f2f2f2;border:1px solid #cfcfcf;border-radius:4px;"></div>
<span class="t" style="left:781.50px;top:775px;font-size:13px;line-height:20px;color:#000;font-weight:700;letter-spacing:-0.056px;">19. 5. 2025</span>
<svg class="i" style="left:881.5px;top:778px" width="12.5" height="12" viewBox="0 0 12.5 12" ><rect x="0.6" y="1.6" width="11.3" height="9.8" rx="1" fill="none" stroke="#666" stroke-width="0.9"/><path d="M0.6 4.4 H11.9 M3.4 0.2 V2.6 M9.1 0.2 V2.6" stroke="#666" stroke-width="0.9"/></svg>
<span class="t" style="left:902.20px;top:775px;font-size:13px;line-height:20px;color:#000;font-weight:700;letter-spacing:-0.163px;">13:47</span>
<div class="b" style="left:1010px;top:774px;width:204px;height:20px;background:#fff;border:1px solid #dcdcdc;border-radius:4px;box-shadow:0 1px 2px rgba(0,0,0,.15);"></div>
<span class="t" style="left:1077.00px;top:775px;font-size:13px;line-height:20px;color:#1d75b4;letter-spacing:-0.141px;">Výpočet lhůt</span>
<span class="t" style="left:639.50px;top:814px;font-size:13px;line-height:20px;color:#555;letter-spacing:-0.204px;">Datum a čas otevírání:</span>
<div class="b" style="left:776px;top:815px;width:438px;height:21px;background:#f2f2f2;border:1px solid #cfcfcf;border-radius:4px;"></div>
<span class="t" style="left:781.50px;top:816px;font-size:13px;line-height:20px;color:#000;font-weight:700;letter-spacing:-0.056px;">19. 5. 2025</span>
<svg class="i" style="left:989px;top:819px" width="12.5" height="12" viewBox="0 0 12.5 12" ><rect x="0.6" y="1.6" width="11.3" height="9.8" rx="1" fill="none" stroke="#666" stroke-width="0.9"/><path d="M0.6 4.4 H11.9 M3.4 0.2 V2.6 M9.1 0.2 V2.6" stroke="#666" stroke-width="0.9"/></svg>
<span class="t" style="left:1009.00px;top:816px;font-size:13px;line-height:20px;color:#000;font-weight:700;letter-spacing:-0.163px;">13:47</span>
<div class="b" style="left:776px;top:856px;width:438px;height:20px;background:#fff;border:1px solid #dcdcdc;border-radius:4px;box-shadow:0 1px 2px rgba(0,0,0,.15);"></div>
<span class="t" style="left:869.50px;top:858px;font-size:13px;line-height:20px;color:#1d75b4;letter-spacing:-0.279px;">Odeslání výzvy k podání žádosti o účast v ZŘ</span>
<span class="t" style="left:343.00px;top:897px;font-size:16px;line-height:22px;color:#333;font-weight:700;letter-spacing:-0.701px;">Přehled podaných žádostí o účast</span>
<div class="b" style="left:343px;top:922px;width:1228px;height:208px;border:3px solid #dddfe2;border-radius:10px;background:#fff;"></div>
<div class="b" style="left:343px;top:922px;width:1228px;height:208px;border:1.4px solid #1d75b4;border-radius:10px;"></div>
<svg class="i" style="left:371px;top:937px" width="16.2" height="16.8" viewBox="0 0 16.2 16.8" ><circle cx="8.1" cy="6.2" r="5.4" fill="none" stroke="#1d75b4" stroke-width="1.15"/><path d="M3.3 9.2 L0.6 12.1 L3.5 13 L4.4 16.1 L6.2 11.9 M12.9 9.2 L15.6 12.1 L12.7 13 L11.8 16.1 L10 11.9" fill="none" stroke="#1d75b4" stroke-width="1.1" stroke-linejoin="round" stroke-linecap="round"/></svg>
<div class="b" style="left:411px;top:936px;width:1px;height:18px;background:#1d75b4"></div>
<svg class="i" style="left:420px;top:936.9px" width="17" height="17" viewBox="0 0 17 17" ><path d="M4 3.2 H1.7 Q0.6 3.2 0.6 4.3 V14.8 Q0.6 15.9 1.7 15.9 H6.8 M9.1 3.2 H11.6 Q12.7 3.2 12.7 4.3 V6.3" fill="none" stroke="#1d75b4" stroke-width="1.1" stroke-linecap="round"/><path d="M4 3.2 C5.1 3.2 4.9 0.9 6.55 0.9 C8.2 0.9 8 3.2 9.1 3.2" fill="none" stroke="#1d75b4" stroke-width="1.1"/><circle cx="6.55" cy="3.1" r="0.65" fill="#1d75b4"/><path d="M3.1 7.3 H6.6" stroke="#1d75b4" stroke-width="1.3"/><path d="M3.1 9.9 H5.6 M3.1 12.5 H5.2" stroke="#1d75b4" stroke-width="1.1"/><polygon points="11.80,6.80 13.23,8.90 15.67,9.15 14.65,11.50 15.67,13.85 13.23,14.10 11.80,16.20 10.38,14.10 7.93,13.85 8.95,11.50 7.93,9.15 10.38,8.90" fill="none" stroke="#1d75b4" stroke-width="1.05" stroke-linejoin="round"/><circle cx="11.8" cy="11.5" r="1.15" fill="#1d75b4"/></svg>
<span class="t" style="left:440.30px;top:936px;font-size:13px;line-height:20px;color:#1d75b4;letter-spacing:-0.164px;">Evidovat žádost o účast</span>
<div class="b" style="left:581px;top:936px;width:1px;height:18px;background:#1d75b4"></div>
<div class="b" style="left:581.6px;top:931px;width:130.4px;height:28px;background:#4caf50;border-radius:5px;"></div>
<svg class="i" style="left:589.7px;top:936.9px" width="17" height="17" viewBox="0 0 17 17" ><path d="M4 3.2 H1.7 Q0.6 3.2 0.6 4.3 V14.8 Q0.6 15.9 1.7 15.9 H6.8 M9.1 3.2 H11.6 Q12.7 3.2 12.7 4.3 V6.3" fill="none" stroke="#fff" stroke-width="1.1" stroke-linecap="round"/><path d="M4 3.2 C5.1 3.2 4.9 0.9 6.55 0.9 C8.2 0.9 8 3.2 9.1 3.2" fill="none" stroke="#fff" stroke-width="1.1"/><circle cx="6.55" cy="3.1" r="0.65" fill="#fff"/><path d="M3.1 7.3 H6.6" stroke="#fff" stroke-width="1.3"/><path d="M3.1 9.9 H5.6 M3.1 12.5 H5.2" stroke="#fff" stroke-width="1.1"/><circle cx="12.1" cy="12.1" r="3.95" fill="none" stroke="#fff" stroke-width="1.05"/><path d="M9.9 12.1 H14 M12.5 10.4 L14.2 12.1 L12.5 13.8" fill="none" stroke="#fff" stroke-width="1.05"/></svg>
<span class="t" style="left:610.00px;top:936px;font-size:13px;line-height:20px;color:#fff;letter-spacing:-0.253px;">Ukončit otevírání</span>
<svg class="i" style="left:719.6px;top:936.9px" width="17" height="17" viewBox="0 0 17 17" ><path d="M4 3.2 H1.7 Q0.6 3.2 0.6 4.3 V14.8 Q0.6 15.9 1.7 15.9 H6.8 M9.1 3.2 H11.6 Q12.7 3.2 12.7 4.3 V6.3" fill="none" stroke="#1d75b4" stroke-width="1.1" stroke-linecap="round"/><path d="M4 3.2 C5.1 3.2 4.9 0.9 6.55 0.9 C8.2 0.9 8 3.2 9.1 3.2" fill="none" stroke="#1d75b4" stroke-width="1.1"/><circle cx="6.55" cy="3.1" r="0.65" fill="#1d75b4"/><path d="M3.1 7.3 H6.6" stroke="#1d75b4" stroke-width="1.3"/><path d="M3.1 9.9 H5.6 M3.1 12.5 H5.2" stroke="#1d75b4" stroke-width="1.1"/><circle cx="12.1" cy="12.1" r="3.95" fill="none" stroke="#1d75b4" stroke-width="1.05"/><path d="M9.9 12.1 H14 M12.5 10.4 L14.2 12.1 L12.5 13.8" fill="none" stroke="#1d75b4" stroke-width="1.05"/></svg>
<span class="t" style="left:739.50px;top:936px;font-size:13px;line-height:20px;color:#1d75b4;letter-spacing:-0.125px;">Stáhnout žádosti o účast</span>
<div class="b" style="left:886px;top:936px;width:1px;height:18px;background:#1d75b4"></div>
<svg class="i" style="left:895px;top:937.5px" width="16" height="16" viewBox="0 0 16 16" ><path d="M3.8 4.4 V1.1 Q3.8 0.6 4.3 0.6 H11.7 Q12.2 0.6 12.2 1.1 V4.4" fill="none" stroke="#1d75b4" stroke-width="1.15"/><path d="M3.8 11.6 H1.8 Q0.6 11.6 0.6 10.4 V5.6 Q0.6 4.4 1.8 4.4 H14.2 Q15.4 4.4 15.4 5.6 V10.4 Q15.4 11.6 14.2 11.6 H12.2" fill="none" stroke="#1d75b4" stroke-width="1.15"/><rect x="3.8" y="8.8" width="8.4" height="6.6" rx="0.4" fill="none" stroke="#1d75b4" stroke-width="1.15"/><path d="M5.6 10.9 H10.6 M5.6 13 H9.2" stroke="#1d75b4" stroke-width="1.0"/><path d="M2.3 6.4 H3.3" stroke="#1d75b4" stroke-width="1.0" stroke-linecap="round"/></svg>
<svg class="i" style="left:914.5px;top:941.5px" width="8" height="7" viewBox="0 0 8 7" ><path d="M0.8 0.7 H6.9 L3.85 5.4 Z" fill="none" stroke="#1d75b4" stroke-width="1.25" stroke-linejoin="round"/></svg>
<div class="b" style="left:934.5px;top:936px;width:1px;height:18px;background:#1d75b4"></div>
<svg class="i" style="left:944px;top:936.5px" width="15" height="16.2" viewBox="0 0 15 16.2" ><path d="M4.6 6.45 H2.2 Q1.45 6.45 1.45 7.2 V14.8 Q1.45 15.55 2.2 15.55 H12.7 Q13.45 15.55 13.45 14.8 V7.2 Q13.45 6.45 12.7 6.45 H10.4" fill="none" stroke="#1d75b4" stroke-width="1.15"/><path d="M7.6 8.3 V1.1 M4.9 3.7 L7.6 0.95 L10.3 3.7" fill="none" stroke="#1d75b4" stroke-width="1.15" stroke-linejoin="round"/></svg>
<svg class="i" style="left:963px;top:941.5px" width="8" height="7" viewBox="0 0 8 7" ><path d="M0.8 0.7 H6.9 L3.85 5.4 Z" fill="none" stroke="#1d75b4" stroke-width="1.25" stroke-linejoin="round"/></svg>
<div class="b" style="left:982px;top:936px;width:1px;height:18px;background:#1d75b4"></div>
<svg class="i" style="left:1485.2px;top:936.8px" width="17" height="16.2" viewBox="0 0 17 16.2" ><path d="M1.1 0.9 H15.9 C15.9 4.6 13.4 7 10.3 8 V13.2 L7 15.2 V8 C3.6 7 1.1 4.6 1.1 0.9 Z" fill="none" stroke="#1d75b4" stroke-width="1.15" stroke-linejoin="round"/></svg>
<div class="b" style="left:1509px;top:936px;width:1px;height:18px;background:#1d75b4"></div>
<svg class="i" style="left:1521.5px;top:941.5px" width="8" height="7" viewBox="0 0 8 7" ><path d="M0.8 0.7 H6.9 L3.85 5.4 Z" fill="none" stroke="#1d75b4" stroke-width="1.25" stroke-linejoin="round"/></svg>
<span class="t" style="left:1538.00px;top:938px;font-size:12px;line-height:20px;color:#1d75b4;letter-spacing:0.472px;">MW</span>
<div class="b" style="left:1567px;top:936px;width:1px;height:18px;background:#1d75b4"></div>
<div class="b" style="left:346px;top:964px;width:1222px;height:38px;background:#f2f2f2;border-top:1px solid #e6e6e6;border-bottom:1px solid #d2d2d2;"></div>
<div class="b" style="left:411px;top:965px;width:1px;height:36px;background:#d9d9d9;"></div>
<div class="b" style="left:491px;top:965px;width:1px;height:36px;background:#d9d9d9;"></div>
<div class="b" style="left:673px;top:965px;width:1px;height:36px;background:#d9d9d9;"></div>
<div class="b" style="left:773px;top:965px;width:1px;height:36px;background:#d9d9d9;"></div>
<div class="b" style="left:923px;top:965px;width:1px;height:36px;background:#d9d9d9;"></div>
<div class="b" style="left:1073px;top:965px;width:1px;height:36px;background:#d9d9d9;"></div>
<div class="b" style="left:1213px;top:965px;width:1px;height:36px;background:#d9d9d9;"></div>
<div class="b" style="left:1353px;top:965px;width:1px;height:36px;background:#d9d9d9;"></div>
<svg class="i" style="left:370.9px;top:975px" width="16.2" height="16" viewBox="0 0 16.2 16" ><rect x="0.6" y="0.6" width="15" height="14.8" rx="1.2" fill="none" stroke="#555" stroke-width="1.2"/><path d="M3 5.4 H9.4 M3 10.5 H5.5 M8.5 10.5 H13" stroke="#555" stroke-width="1.0"/><circle cx="10.9" cy="5.4" r="1.5" fill="none" stroke="#555" stroke-width="0.9"/><circle cx="7" cy="10.5" r="1.5" fill="none" stroke="#555" stroke-width="0.9"/></svg>
<span class="t" style="left:420.00px;top:972px;font-size:13px;line-height:20px;color:#555;letter-spacing:-0.406px;">Číslo</span>
<svg class="i" style="left:474.3px;top:978.4px" width="8" height="7" viewBox="0 0 8 7" ><path d="M0.8 0.7 H6.9 L3.85 5.4 Z" fill="none" stroke="#444" stroke-width="1.25" stroke-linejoin="round"/></svg>
<span class="t" style="left:500.00px;top:972px;font-size:13px;line-height:20px;color:#000;font-weight:700;letter-spacing:-0.507px;">Název dodavatele</span>
<svg class="i" style="left:656px;top:978.4px" width="8" height="7" viewBox="0 0 8 7" ><path d="M0.8 0.7 H6.9 L3.85 5.4 Z" fill="none" stroke="#444" stroke-width="1.25" stroke-linejoin="round"/></svg>
<span class="t" style="left:682.00px;top:972px;font-size:13px;line-height:20px;color:#555;letter-spacing:-0.812px;">IČO</span>
<svg class="i" style="left:756px;top:978.4px" width="8" height="7" viewBox="0 0 8 7" ><path d="M0.8 0.7 H6.9 L3.85 5.4 Z" fill="none" stroke="#444" stroke-width="1.25" stroke-linejoin="round"/></svg>
<span class="t" style="left:782.00px;top:972px;font-size:13px;line-height:20px;color:#555;letter-spacing:-0.243px;">Datum podání</span>
<svg class="i" style="left:906px;top:978.4px" width="8" height="7" viewBox="0 0 8 7" ><path d="M0.8 0.7 H6.9 L3.85 5.4 Z" fill="none" stroke="#444" stroke-width="1.25" stroke-linejoin="round"/></svg>
<span class="t" style="left:932.00px;top:972px;font-size:13px;line-height:20px;color:#555;letter-spacing:-0.172px;">Stav</span>
<svg class="i" style="left:1056px;top:978.4px" width="8" height="7" viewBox="0 0 8 7" ><path d="M0.8 0.7 H6.9 L3.85 5.4 Z" fill="none" stroke="#444" stroke-width="1.25" stroke-linejoin="round"/></svg>
<span class="t" style="left:1082.00px;top:972px;font-size:13px;line-height:20px;color:#555;letter-spacing:-0.285px;">Podepsána</span>
<svg class="i" style="left:1196px;top:978.4px" width="8" height="7" viewBox="0 0 8 7" ><path d="M0.8 0.7 H6.9 L3.85 5.4 Z" fill="none" stroke="#444" stroke-width="1.25" stroke-linejoin="round"/></svg>
<span class="t" style="left:1222.00px;top:972px;font-size:13px;line-height:20px;color:#555;letter-spacing:-0.094px;">Listinná podoba</span>
<svg class="i" style="left:1336px;top:978.4px" width="8" height="7" viewBox="0 0 8 7" ><path d="M0.8 0.7 H6.9 L3.85 5.4 Z" fill="none" stroke="#444" stroke-width="1.25" stroke-linejoin="round"/></svg>
<span class="t" style="left:1362.00px;top:972px;font-size:13px;line-height:20px;color:#555;letter-spacing:-0.295px;">Označena jako nepodaná</span>
<svg class="i" style="left:1550px;top:978.4px" width="8" height="7" viewBox="0 0 8 7" ><path d="M0.8 0.7 H6.9 L3.85 5.4 Z" fill="none" stroke="#444" stroke-width="1.25" stroke-linejoin="round"/></svg>
<svg class="i" style="left:607.5px;top:975px" width="12" height="12" viewBox="0 0 12 12" ><path d="M6 11.6 V0.9 M1 5.8 L6 0.8 L11 5.8" fill="none" stroke="#000" stroke-width="1.25"/></svg>
<div class="b" style="left:346px;top:1002px;width:1222px;height:25px;background:#c4daf5;border-bottom:1px solid #93baeb;"></div>
<svg class="i" style="left:357.5px;top:1011.3px" width="17" height="5.6" viewBox="0 0 17 5.6" ><rect x="1" y="1.3" width="3.1" height="3.0" rx="1.1" fill="none" stroke="#1d75b4" stroke-width="1.1"/><rect x="6.75" y="1.3" width="3.1" height="3.0" rx="1.1" fill="none" stroke="#1d75b4" stroke-width="1.1"/><rect x="12.55" y="1.3" width="3.1" height="3.0" rx="1.1" fill="none" stroke="#1d75b4" stroke-width="1.1"/></svg>
<svg class="i" style="left:384px;top:1005.7px" width="16" height="16" viewBox="0 0 16 16" ><circle cx="8" cy="8" r="7.5" fill="none" stroke="#1d75b4" stroke-width="1.15"/><circle cx="7.8" cy="4.7" r="0.8" fill="#1d75b4"/><path d="M7 6.9 Q8.3 6.9 8.1 8.5 L7.9 10 Q7.8 11.3 9.2 11.2" fill="none" stroke="#1d75b4" stroke-width="1.05" stroke-linecap="round"/></svg>
<span class="t" style="left:420.00px;top:1005px;font-size:13px;line-height:20px;color:#000;letter-spacing:-0.102px;">001</span>
<span class="t" style="left:500.00px;top:1005px;font-size:13px;line-height:20px;color:#000;letter-spacing:-0.106px;">Dodavatel - školení 2</span>
<span class="t" style="left:682.00px;top:1005px;font-size:13px;line-height:20px;color:#000;letter-spacing:0.022px;">12345678</span>
<span class="t" style="left:782.00px;top:1005px;font-size:13px;line-height:20px;color:#000;letter-spacing:-0.016px;">19. 5. 2025 11:49</span>
<span class="t" style="left:932.00px;top:1005px;font-size:13px;line-height:20px;color:#000;letter-spacing:-0.283px;">Otevřena</span>
<svg class="i" style="left:1139.5px;top:1008.1px" width="9" height="9" viewBox="0 0 9 9" ><path d="M1.05 1.15 L7.95 7.85 M7.95 1.15 L1.05 7.85" stroke="#d3271f" stroke-width="2.1"/></svg>
<svg class="i" style="left:1280px;top:1008.1px" width="9" height="9" viewBox="0 0 9 9" ><path d="M1.05 1.15 L7.95 7.85 M7.95 1.15 L1.05 7.85" stroke="#d3271f" stroke-width="2.1"/></svg>
<svg class="i" style="left:1456.9px;top:1008.1px" width="9" height="9" viewBox="0 0 9 9" ><path d="M1.05 1.15 L7.95 7.85 M7.95 1.15 L1.05 7.85" stroke="#d3271f" stroke-width="2.1"/></svg>
<div class="b" style="left:346px;top:1051px;width:1222px;height:1px;background:#e0e0e0;"></div>
<svg class="i" style="left:357.5px;top:1036.3px" width="17" height="5.6" viewBox="0 0 17 5.6" ><rect x="1" y="1.3" width="3.1" height="3.0" rx="1.1" fill="none" stroke="#1d75b4" stroke-width="1.1"/><rect x="6.75" y="1.3" width="3.1" height="3.0" rx="1.1" fill="none" stroke="#1d75b4" stroke-width="1.1"/><rect x="12.55" y="1.3" width="3.1" height="3.0" rx="1.1" fill="none" stroke="#1d75b4" stroke-width="1.1"/></svg>
<svg class="i" style="left:384px;top:1030.7px" width="16" height="16" viewBox="0 0 16 16" ><circle cx="8" cy="8" r="7.5" fill="none" stroke="#1d75b4" stroke-width="1.15"/><circle cx="7.8" cy="4.7" r="0.8" fill="#1d75b4"/><path d="M7 6.9 Q8.3 6.9 8.1 8.5 L7.9 10 Q7.8 11.3 9.2 11.2" fill="none" stroke="#1d75b4" stroke-width="1.05" stroke-linecap="round"/></svg>
<span class="t" style="left:420.00px;top:1030px;font-size:13px;line-height:20px;color:#000;letter-spacing:-0.102px;">002</span>
<span class="t" style="left:500.00px;top:1030px;font-size:13px;line-height:20px;color:#000;letter-spacing:-0.106px;">Dodavatel - školení 3</span>
<span class="t" style="left:682.00px;top:1030px;font-size:13px;line-height:20px;color:#000;letter-spacing:0.022px;">12345678</span>
<span class="t" style="left:782.00px;top:1030px;font-size:13px;line-height:20px;color:#000;letter-spacing:-0.016px;">19. 5. 2025 11:50</span>
<span class="t" style="left:932.00px;top:1030px;font-size:13px;line-height:20px;color:#000;letter-spacing:-0.283px;">Otevřena</span>
<svg class="i" style="left:1139.5px;top:1033.1px" width="9" height="9" viewBox="0 0 9 9" ><path d="M1.05 1.15 L7.95 7.85 M7.95 1.15 L1.05 7.85" stroke="#d3271f" stroke-width="2.1"/></svg>
<svg class="i" style="left:1280px;top:1033.1px" width="9" height="9" viewBox="0 0 9 9" ><path d="M1.05 1.15 L7.95 7.85 M7.95 1.15 L1.05 7.85" stroke="#d3271f" stroke-width="2.1"/></svg>
<svg class="i" style="left:1456.9px;top:1033.1px" width="9" height="9" viewBox="0 0 9 9" ><path d="M1.05 1.15 L7.95 7.85 M7.95 1.15 L1.05 7.85" stroke="#d3271f" stroke-width="2.1"/></svg>
<div class="b" style="left:346px;top:1076px;width:1222px;height:1px;background:#e0e0e0;"></div>
<svg class="i" style="left:357.5px;top:1061.3px" width="17" height="5.6" viewBox="0 0 17 5.6" ><rect x="1" y="1.3" width="3.1" height="3.0" rx="1.1" fill="none" stroke="#1d75b4" stroke-width="1.1"/><rect x="6.75" y="1.3" width="3.1" height="3.0" rx="1.1" fill="none" stroke="#1d75b4" stroke-width="1.1"/><rect x="12.55" y="1.3" width="3.1" height="3.0" rx="1.1" fill="none" stroke="#1d75b4" stroke-width="1.1"/></svg>
<svg class="i" style="left:384px;top:1055.7px" width="16" height="16" viewBox="0 0 16 16" ><circle cx="8" cy="8" r="7.5" fill="none" stroke="#1d75b4" stroke-width="1.15"/><circle cx="7.8" cy="4.7" r="0.8" fill="#1d75b4"/><path d="M7 6.9 Q8.3 6.9 8.1 8.5 L7.9 10 Q7.8 11.3 9.2 11.2" fill="none" stroke="#1d75b4" stroke-width="1.05" stroke-linecap="round"/></svg>
<span class="t" style="left:420.00px;top:1055px;font-size:13px;line-height:20px;color:#000;letter-spacing:-0.102px;">003</span>
<span class="t" style="left:500.00px;top:1055px;font-size:13px;line-height:20px;color:#000;letter-spacing:-0.106px;">Dodavatel - školení 5</span>
<span class="t" style="left:682.00px;top:1055px;font-size:13px;line-height:20px;color:#000;letter-spacing:0.022px;">12345678</span>
<span class="t" style="left:782.00px;top:1055px;font-size:13px;line-height:20px;color:#000;letter-spacing:-0.016px;">19. 5. 2025 11:58</span>
<span class="t" style="left:932.00px;top:1055px;font-size:13px;line-height:20px;color:#000;letter-spacing:-0.283px;">Otevřena</span>
<svg class="i" style="left:1139.5px;top:1058.1px" width="9" height="9" viewBox="0 0 9 9" ><path d="M1.05 1.15 L7.95 7.85 M7.95 1.15 L1.05 7.85" stroke="#d3271f" stroke-width="2.1"/></svg>
<svg class="i" style="left:1280px;top:1058.1px" width="9" height="9" viewBox="0 0 9 9" ><path d="M1.05 1.15 L7.95 7.85 M7.95 1.15 L1.05 7.85" stroke="#d3271f" stroke-width="2.1"/></svg>
<svg class="i" style="left:1456.4px;top:1058.1px" width="11" height="9" viewBox="0 0 11 9" ><path d="M0.9 4.6 L3.9 7.6 L10.3 1" fill="none" stroke="#2fb03a" stroke-width="2.1"/></svg>
<div class="b" style="left:346px;top:1101px;width:1222px;height:1px;background:#e0e0e0;"></div>
<svg class="i" style="left:357.5px;top:1086.3px" width="17" height="5.6" viewBox="0 0 17 5.6" ><rect x="1" y="1.3" width="3.1" height="3.0" rx="1.1" fill="none" stroke="#1d75b4" stroke-width="1.1"/><rect x="6.75" y="1.3" width="3.1" height="3.0" rx="1.1" fill="none" stroke="#1d75b4" stroke-width="1.1"/><rect x="12.55" y="1.3" width="3.1" height="3.0" rx="1.1" fill="none" stroke="#1d75b4" stroke-width="1.1"/></svg>
<svg class="i" style="left:384px;top:1080.7px" width="16" height="16" viewBox="0 0 16 16" ><circle cx="8" cy="8" r="7.5" fill="none" stroke="#1d75b4" stroke-width="1.15"/><circle cx="7.8" cy="4.7" r="0.8" fill="#1d75b4"/><path d="M7 6.9 Q8.3 6.9 8.1 8.5 L7.9 10 Q7.8 11.3 9.2 11.2" fill="none" stroke="#1d75b4" stroke-width="1.05" stroke-linecap="round"/></svg>
<span class="t" style="left:420.00px;top:1080px;font-size:13px;line-height:20px;color:#000;letter-spacing:-0.102px;">004</span>
<span class="t" style="left:500.00px;top:1080px;font-size:13px;line-height:20px;color:#000;letter-spacing:-0.106px;">Dodavatel - školení 6</span>
<span class="t" style="left:682.00px;top:1080px;font-size:13px;line-height:20px;color:#000;letter-spacing:0.022px;">45359326</span>
<span class="t" style="left:782.00px;top:1080px;font-size:13px;line-height:20px;color:#000;letter-spacing:-0.016px;">19. 5. 2025 11:58</span>
<span class="t" style="left:932.00px;top:1080px;font-size:13px;line-height:20px;color:#000;letter-spacing:-0.283px;">Otevřena</span>
<svg class="i" style="left:1139.5px;top:1083.1px" width="9" height="9" viewBox="0 0 9 9" ><path d="M1.05 1.15 L7.95 7.85 M7.95 1.15 L1.05 7.85" stroke="#d3271f" stroke-width="2.1"/></svg>
<svg class="i" style="left:1280px;top:1083.1px" width="9" height="9" viewBox="0 0 9 9" ><path d="M1.05 1.15 L7.95 7.85 M7.95 1.15 L1.05 7.85" stroke="#d3271f" stroke-width="2.1"/></svg>
<svg class="i" style="left:1456.9px;top:1083.1px" width="9" height="9" viewBox="0 0 9 9" ><path d="M1.05 1.15 L7.95 7.85 M7.95 1.15 L1.05 7.85" stroke="#d3271f" stroke-width="2.1"/></svg>
<svg class="i" style="left:357.5px;top:1111.3px" width="17" height="5.6" viewBox="0 0 17 5.6" ><rect x="1" y="1.3" width="3.1" height="3.0" rx="1.1" fill="none" stroke="#1d75b4" stroke-width="1.1"/><rect x="6.75" y="1.3" width="3.1" height="3.0" rx="1.1" fill="none" stroke="#1d75b4" stroke-width="1.1"/><rect x="12.55" y="1.3" width="3.1" height="3.0" rx="1.1" fill="none" stroke="#1d75b4" stroke-width="1.1"/></svg>
<svg class="i" style="left:384px;top:1105.7px" width="16" height="16" viewBox="0 0 16 16" ><circle cx="8" cy="8" r="7.5" fill="none" stroke="#1d75b4" stroke-width="1.15"/><circle cx="7.8" cy="4.7" r="0.8" fill="#1d75b4"/><path d="M7 6.9 Q8.3 6.9 8.1 8.5 L7.9 10 Q7.8 11.3 9.2 11.2" fill="none" stroke="#1d75b4" stroke-width="1.05" stroke-linecap="round"/></svg>
<span class="t" style="left:420.00px;top:1105px;font-size:13px;line-height:20px;color:#000;letter-spacing:-0.102px;">005</span>
<span class="t" style="left:500.00px;top:1105px;font-size:13px;line-height:20px;color:#000;letter-spacing:-0.106px;">Dodavatel - školení 6</span>
<span class="t" style="left:682.00px;top:1105px;font-size:13px;line-height:20px;color:#000;letter-spacing:0.022px;">45359326</span>
<span class="t" style="left:782.00px;top:1105px;font-size:13px;line-height:20px;color:#000;letter-spacing:-0.075px;">19. 5. 2025 12:00</span>
<span class="t" style="left:932.00px;top:1105px;font-size:13px;line-height:20px;color:#000;letter-spacing:-0.156px;">Otevření zaevidováno</span>
<svg class="i" style="left:1139.5px;top:1108.1px" width="9" height="9" viewBox="0 0 9 9" ><path d="M1.05 1.15 L7.95 7.85 M7.95 1.15 L1.05 7.85" stroke="#d3271f" stroke-width="2.1"/></svg>
<svg class="i" style="left:1279.5px;top:1108.1px" width="11" height="9" viewBox="0 0 11 9" ><path d="M0.9 4.6 L3.9 7.6 L10.3 1" fill="none" stroke="#2fb03a" stroke-width="2.1"/></svg>
<svg class="i" style="left:1456.9px;top:1108.1px" width="9" height="9" viewBox="0 0 9 9" ><path d="M1.05 1.15 L7.95 7.85 M7.95 1.15 L1.05 7.85" stroke="#d3271f" stroke-width="2.1"/></svg>
<div class="b" style="left:1298px;top:44px;width:518px;height:702px;background:#fff;border:1px solid #c4c4c4;border-radius:10px;box-shadow:0 9px 18px rgba(0,0,0,.2),0 1px 4px rgba(0,0,0,.1);"></div>
<div class="b" style="left:1319px;top:64px;width:196px;height:52px;border:1.3px solid #ec1c24;"></div>
<span class="t" style="left:1323.30px;top:69px;font-size:18.5px;line-height:22px;color:#000;font-weight:700;letter-spacing:-0.789px;">Seznam generovaných</span>
<span class="t" style="left:1323.30px;top:91px;font-size:18.5px;line-height:22px;color:#000;font-weight:700;letter-spacing:-0.750px;">dokumentů</span>
<span class="t" style="left:1690.00px;top:72px;font-size:13px;line-height:20px;color:#1d75b4;letter-spacing:-0.203px;">Vše</span>
<span class="t" style="left:1736.40px;top:72px;font-size:13px;line-height:20px;color:#555;letter-spacing:-0.241px;">Nedávné</span>
<div class="b" style="left:1670px;top:100px;width:137px;height:1px;background:#e4e4e4;"></div>
<div class="b" style="left:1678px;top:89px;width:46px;height:9px;background:linear-gradient(to bottom,rgba(29,117,180,0),rgba(29,117,180,.2));"></div>
<div class="b" style="left:1678px;top:98px;width:46px;height:3px;background:#1d75b4;"></div>
<div class="b" style="left:1799px;top:55px;width:6px;height:289.5px;background:#979797;border-radius:3px;"></div>
<div class="b" style="left:1323px;top:133px;width:32px;height:32px;background:#4caf50;border-radius:50%;"></div>
<svg class="i" style="left:1331px;top:141px" width="16" height="16" viewBox="0 0 16 16" ><path d="M8 0.5 V8.1 M5.1 5.5 L8 8.3 L10.9 5.5" fill="none" stroke="#f4fbf4" stroke-width="1.25" stroke-linecap="round" stroke-linejoin="round"/><path d="M5 10.1 H2.4 Q1 10.1 1 11.5 V13.6 Q1 15 2.4 15 H13.6 Q15 15 15 13.6 V11.5 Q15 10.1 13.6 10.1 H11 Q10.4 12.3 8 12.3 Q5.6 12.3 5 10.1 Z" fill="none" stroke="#f4fbf4" stroke-width="1.25" stroke-linejoin="round"/></svg>
<span class="t" style="left:1371.30px;top:125px;font-size:13px;line-height:20px;color:#000;font-weight:700;letter-spacing:-0.423px;">Stahování žádostí o účast</span>
<span class="t" style="left:1717.00px;top:125px;font-size:13px;line-height:20px;color:#666;letter-spacing:-0.223px;">Dokončeno</span>
<span class="t" style="left:1371.30px;top:140px;font-size:13px;line-height:20px;color:#666;letter-spacing:0.011px;">N006/25/V00004748 - Telekomunikační služby - veřejný internet</span>
<span class="t" style="left:1371.30px;top:155px;font-size:13px;line-height:20px;color:#1d75b4;letter-spacing:-0.076px;">Zobrazit export &gt;&gt;</span>
<div class="b" style="left:1323px;top:189px;width:32px;height:32px;background:#4caf50;border-radius:50%;"></div>
<svg class="i" style="left:1331px;top:197px" width="16" height="16" viewBox="0 0 16 16" ><path d="M8 0.5 V8.1 M5.1 5.5 L8 8.3 L10.9 5.5" fill="none" stroke="#f4fbf4" stroke-width="1.25" stroke-linecap="round" stroke-linejoin="round"/><path d="M5 10.1 H2.4 Q1 10.1 1 11.5 V13.6 Q1 15 2.4 15 H13.6 Q15 15 15 13.6 V11.5 Q15 10.1 13.6 10.1 H11 Q10.4 12.3 8 12.3 Q5.6 12.3 5 10.1 Z" fill="none" stroke="#f4fbf4" stroke-width="1.25" stroke-linejoin="round"/></svg>
<span class="t" style="left:1371.30px;top:181px;font-size:13px;line-height:20px;color:#000;font-weight:700;letter-spacing:-0.487px;">Stahování předběžných zájmů</span>
<span class="t" style="left:1717.00px;top:181px;font-size:13px;line-height:20px;color:#666;letter-spacing:-0.223px;">Dokončeno</span>
<span class="t" style="left:1371.30px;top:196px;font-size:13px;line-height:20px;color:#666;letter-spacing:0.011px;">N006/25/V00004748 - Telekomunikační služby - veřejný internet</span>
<span class="t" style="left:1371.30px;top:211px;font-size:13px;line-height:20px;color:#1d75b4;letter-spacing:-0.076px;">Zobrazit export &gt;&gt;</span>
<div class="b" style="left:1323px;top:245px;width:32px;height:32px;background:#4caf50;border-radius:50%;"></div>
<svg class="i" style="left:1331px;top:253px" width="16" height="16" viewBox="0 0 16 16" ><path d="M8 0.5 V8.1 M5.1 5.5 L8 8.3 L10.9 5.5" fill="none" stroke="#f4fbf4" stroke-width="1.25" stroke-linecap="round" stroke-linejoin="round"/><path d="M5 10.1 H2.4 Q1 10.1 1 11.5 V13.6 Q1 15 2.4 15 H13.6 Q15 15 15 13.6 V11.5 Q15 10.1 13.6 10.1 H11 Q10.4 12.3 8 12.3 Q5.6 12.3 5 10.1 Z" fill="none" stroke="#f4fbf4" stroke-width="1.25" stroke-linejoin="round"/></svg>
<span class="t" style="left:1371.30px;top:237px;font-size:13px;line-height:20px;color:#000;font-weight:700;letter-spacing:-0.523px;">Stahování nabídek</span>
<span class="t" style="left:1717.00px;top:237px;font-size:13px;line-height:20px;color:#666;letter-spacing:-0.223px;">Dokončeno</span>
<span class="t" style="left:1371.30px;top:252px;font-size:13px;line-height:20px;color:#666;letter-spacing:-0.051px;">N006/25/V00004747 - Posílení kybernetické bezpečnosti města 2025…</span>
<span class="t" style="left:1371.30px;top:267px;font-size:13px;line-height:20px;color:#1d75b4;letter-spacing:-0.177px;">Nabídky k postupu N006_25_V00004747 - Posílení kybernetické bezp…</span>
<div class="b" style="left:1323px;top:301px;width:32px;height:32px;background:#4caf50;border-radius:50%;"></div>
<svg class="i" style="left:1331px;top:309px" width="16" height="16" viewBox="0 0 16 16" ><path d="M8 0.5 V8.1 M5.1 5.5 L8 8.3 L10.9 5.5" fill="none" stroke="#f4fbf4" stroke-width="1.25" stroke-linecap="round" stroke-linejoin="round"/><path d="M5 10.1 H2.4 Q1 10.1 1 11.5 V13.6 Q1 15 2.4 15 H13.6 Q15 15 15 13.6 V11.5 Q15 10.1 13.6 10.1 H11 Q10.4 12.3 8 12.3 Q5.6 12.3 5 10.1 Z" fill="none" stroke="#f4fbf4" stroke-width="1.25" stroke-linejoin="round"/></svg>
<span class="t" style="left:1371.30px;top:293px;font-size:13px;line-height:20px;color:#000;font-weight:700;letter-spacing:-0.523px;">Stahování nabídek</span>
<span class="t" style="left:1717.00px;top:293px;font-size:13px;line-height:20px;color:#666;letter-spacing:-0.223px;">Dokončeno</span>
<span class="t" style="left:1371.30px;top:308px;font-size:13px;line-height:20px;color:#666;letter-spacing:0.022px;">N006/25/V00004741 - Posílení kybernetické bezpečnosti města</span>
<span class="t" style="left:1371.30px;top:323px;font-size:13px;line-height:20px;color:#1d75b4;letter-spacing:-0.076px;">Zobrazit export &gt;&gt;</span>
<div class="b" style="left:1323px;top:357px;width:32px;height:32px;background:#4caf50;border-radius:50%;"></div>
<svg class="i" style="left:1331px;top:365px" width="16" height="16" viewBox="0 0 16 16" ><path d="M8 0.5 V8.1 M5.1 5.5 L8 8.3 L10.9 5.5" fill="none" stroke="#f4fbf4" stroke-width="1.25" stroke-linecap="round" stroke-linejoin="round"/><path d="M5 10.1 H2.4 Q1 10.1 1 11.5 V13.6 Q1 15 2.4 15 H13.6 Q15 15 15 13.6 V11.5 Q15 10.1 13.6 10.1 H11 Q10.4 12.3 8 12.3 Q5.6 12.3 5 10.1 Z" fill="none" stroke="#f4fbf4" stroke-width="1.25" stroke-linejoin="round"/></svg>
<span class="t" style="left:1371.30px;top:349px;font-size:13px;line-height:20px;color:#000;font-weight:700;letter-spacing:-0.523px;">Stahování nabídek</span>
<span class="t" style="left:1717.00px;top:349px;font-size:13px;line-height:20px;color:#666;letter-spacing:-0.223px;">Dokončeno</span>
<span class="t" style="left:1371.30px;top:364px;font-size:13px;line-height:20px;color:#666;letter-spacing:0.046px;">N006/25/V00004673 - Disková pole</span>
<span class="t" style="left:1371.30px;top:379px;font-size:13px;line-height:20px;color:#1d75b4;letter-spacing:-0.076px;">Zobrazit export &gt;&gt;</span>
<div class="b" style="left:1323px;top:413px;width:32px;height:32px;background:#4caf50;border-radius:50%;"></div>
<svg class="i" style="left:1331px;top:421px" width="16" height="16" viewBox="0 0 16 16" ><path d="M8 0.5 V8.1 M5.1 5.5 L8 8.3 L10.9 5.5" fill="none" stroke="#f4fbf4" stroke-width="1.25" stroke-linecap="round" stroke-linejoin="round"/><path d="M5 10.1 H2.4 Q1 10.1 1 11.5 V13.6 Q1 15 2.4 15 H13.6 Q15 15 15 13.6 V11.5 Q15 10.1 13.6 10.1 H11 Q10.4 12.3 8 12.3 Q5.6 12.3 5 10.1 Z" fill="none" stroke="#f4fbf4" stroke-width="1.25" stroke-linejoin="round"/></svg>
<span class="t" style="left:1371.30px;top:405px;font-size:13px;line-height:20px;color:#000;font-weight:700;letter-spacing:-0.523px;">Stahování nabídek</span>
<span class="t" style="left:1717.00px;top:405px;font-size:13px;line-height:20px;color:#666;letter-spacing:-0.223px;">Dokončeno</span>
<span class="t" style="left:1371.30px;top:420px;font-size:13px;line-height:20px;color:#666;letter-spacing:0.032px;">N006/25/V00004575 - Domácí kuchyňské spotřebiče</span>
<span class="t" style="left:1371.30px;top:435px;font-size:13px;line-height:20px;color:#1d75b4;letter-spacing:-0.076px;">Zobrazit export &gt;&gt;</span>
<div class="b" style="left:1323px;top:469px;width:32px;height:32px;background:#4caf50;border-radius:50%;"></div>
<svg class="i" style="left:1331px;top:477px" width="16" height="16" viewBox="0 0 16 16" ><path d="M8 0.5 V8.1 M5.1 5.5 L8 8.3 L10.9 5.5" fill="none" stroke="#f4fbf4" stroke-width="1.25" stroke-linecap="round" stroke-linejoin="round"/><path d="M5 10.1 H2.4 Q1 10.1 1 11.5 V13.6 Q1 15 2.4 15 H13.6 Q15 15 15 13.6 V11.5 Q15 10.1 13.6 10.1 H11 Q10.4 12.3 8 12.3 Q5.6 12.3 5 10.1 Z" fill="none" stroke="#f4fbf4" stroke-width="1.25" stroke-linejoin="round"/></svg>
<span class="t" style="left:1371.30px;top:461px;font-size:13px;line-height:20px;color:#000;font-weight:700;letter-spacing:-0.523px;">Stahování nabídek</span>
<span class="t" style="left:1717.00px;top:461px;font-size:13px;line-height:20px;color:#666;letter-spacing:-0.223px;">Dokončeno</span>
<span class="t" style="left:1371.30px;top:476px;font-size:13px;line-height:20px;color:#666;">N006/25/V00004543 - Konzervace sbírkových předmětů</span>
<span class="t" style="left:1371.30px;top:491px;font-size:13px;line-height:20px;color:#1d75b4;letter-spacing:-0.076px;">Zobrazit export &gt;&gt;</span>
<div class="b" style="left:1323px;top:525px;width:32px;height:32px;background:#4caf50;border-radius:50%;"></div>
<svg class="i" style="left:1331px;top:533px" width="16" height="16" viewBox="0 0 16 16" ><path d="M8 0.5 V8.1 M5.1 5.5 L8 8.3 L10.9 5.5" fill="none" stroke="#f4fbf4" stroke-width="1.25" stroke-linecap="round" stroke-linejoin="round"/><path d="M5 10.1 H2.4 Q1 10.1 1 11.5 V13.6 Q1 15 2.4 15 H13.6 Q15 15 15 13.6 V11.5 Q15 10.1 13.6 10.1 H11 Q10.4 12.3 8 12.3 Q5.6 12.3 5 10.1 Z" fill="none" stroke="#f4fbf4" stroke-width="1.25" stroke-linejoin="round"/></svg>
<span class="t" style="left:1371.30px;top:517px;font-size:13px;line-height:20px;color:#000;font-weight:700;letter-spacing:-0.523px;">Stahování nabídek</span>
<span class="t" style="left:1717.00px;top:517px;font-size:13px;line-height:20px;color:#666;letter-spacing:-0.223px;">Dokončeno</span>
<span class="t" style="left:1371.30px;top:532px;font-size:13px;line-height:20px;color:#666;letter-spacing:0.023px;">N006/25/V00004428 - Kancelářské potřeby</span>
<span class="t" style="left:1371.30px;top:547px;font-size:13px;line-height:20px;color:#1d75b4;letter-spacing:-0.076px;">Zobrazit export &gt;&gt;</span>
<div class="b" style="left:1323px;top:581px;width:32px;height:32px;background:#4caf50;border-radius:50%;"></div>
<svg class="i" style="left:1331px;top:589px" width="16" height="16" viewBox="0 0 16 16" ><path d="M8 0.5 V8.1 M5.1 5.5 L8 8.3 L10.9 5.5" fill="none" stroke="#f4fbf4" stroke-width="1.25" stroke-linecap="round" stroke-linejoin="round"/><path d="M5 10.1 H2.4 Q1 10.1 1 11.5 V13.6 Q1 15 2.4 15 H13.6 Q15 15 15 13.6 V11.5 Q15 10.1 13.6 10.1 H11 Q10.4 12.3 8 12.3 Q5.6 12.3 5 10.1 Z" fill="none" stroke="#f4fbf4" stroke-width="1.25" stroke-linejoin="round"/></svg>
<span class="t" style="left:1371.30px;top:573px;font-size:13px;line-height:20px;color:#000;font-weight:700;letter-spacing:-0.519px;">Export zadávacího postupu</span>
<span class="t" style="left:1717.00px;top:573px;font-size:13px;line-height:20px;color:#666;letter-spacing:-0.223px;">Dokončeno</span>
<span class="t" style="left:1371.30px;top:588px;font-size:13px;line-height:20px;color:#666;letter-spacing:0.031px;">N006/25/V00003298 - Rekonstrukce školy</span>
<span class="t" style="left:1371.30px;top:603px;font-size:13px;line-height:20px;color:#1d75b4;letter-spacing:-0.132px;">N006_25_V00003298.zip</span>
<div class="b" style="left:1323px;top:637px;width:32px;height:32px;background:#bdbdbd;border-radius:50%;"></div>
<svg class="i" style="left:1331px;top:645px" width="16" height="16" viewBox="0 0 16 16" ><path d="M8 0.5 V8.1 M5.1 5.5 L8 8.3 L10.9 5.5" fill="none" stroke="#e8e8e8" stroke-width="1.25" stroke-linecap="round" stroke-linejoin="round"/><path d="M5 10.1 H2.4 Q1 10.1 1 11.5 V13.6 Q1 15 2.4 15 H13.6 Q15 15 15 13.6 V11.5 Q15 10.1 13.6 10.1 H11 Q10.4 12.3 8 12.3 Q5.6 12.3 5 10.1 Z" fill="none" stroke="#e8e8e8" stroke-width="1.25" stroke-linejoin="round"/></svg>
<span class="t" style="left:1371.30px;top:629px;font-size:13px;line-height:20px;color:#666;letter-spacing:-0.156px;">Stahování předběžných nabídek</span>
<span class="t" style="left:1717.00px;top:629px;font-size:13px;line-height:20px;color:#666;letter-spacing:-0.223px;">Dokončeno</span>
<span class="t" style="left:1371.30px;top:644px;font-size:13px;line-height:20px;color:#666;letter-spacing:-0.043px;">N006/24/V00004051 - Nákup ovoce a ořechů (samostatné zpřístupn…</span>
<span class="t" style="left:1371.30px;top:659px;font-size:13px;line-height:20px;color:#1d75b4;letter-spacing:0.017px;">Nahrazujici_dokument.pdf</span>
<div class="b" style="left:1369px;top:155px;width:112px;height:19.5px;border:1.3px solid #ec1c24;"></div>
<span class="t" style="left:1517.50px;top:700px;font-size:13px;line-height:20px;color:#555;letter-spacing:-0.165px;">Zobrazit vše</span>
</body></html>
